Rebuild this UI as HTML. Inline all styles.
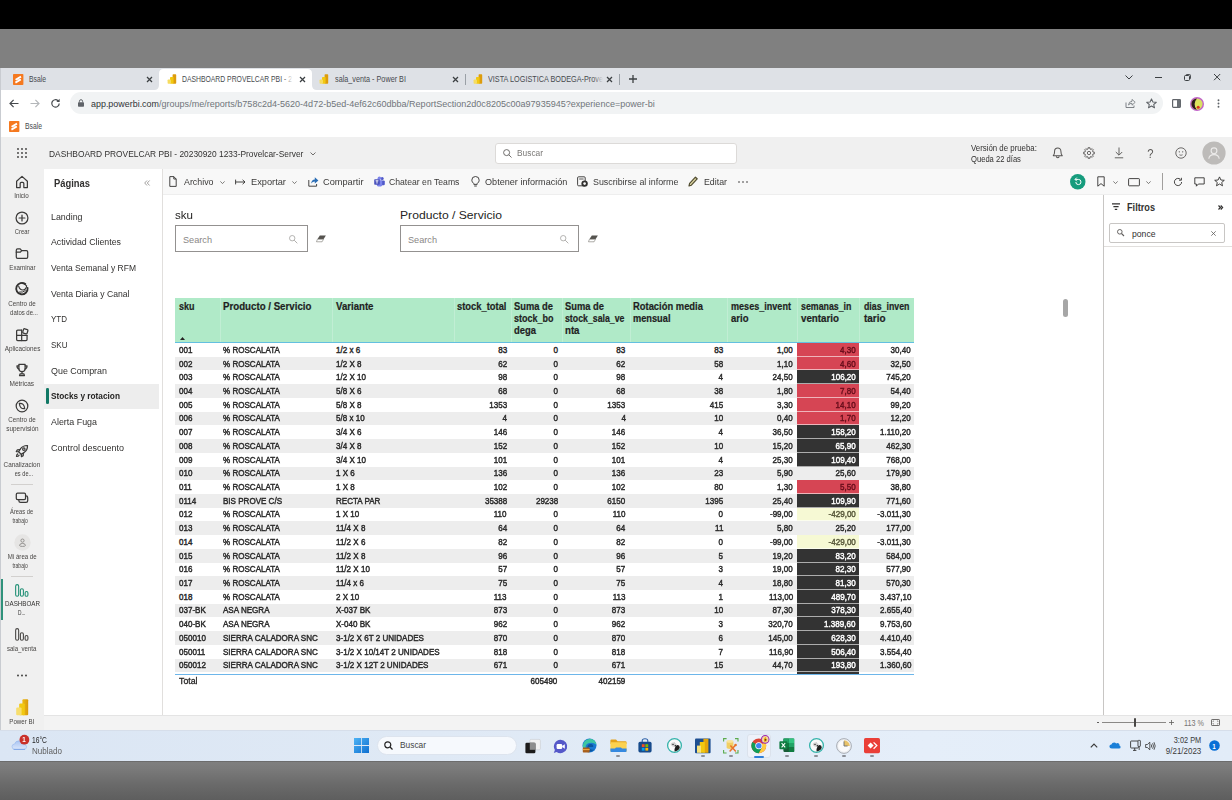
<!DOCTYPE html>
<html lang="es"><head><meta charset="utf-8"><title>DASHBOARD PROVELCAR PBI</title>
<style>
html,body{margin:0;padding:0;}
body{width:1232px;height:800px;overflow:hidden;position:relative;background:#fff;font-family:"Liberation Sans",sans-serif;}
.a{position:absolute;box-sizing:border-box;}
.t{position:absolute;white-space:nowrap;display:block;opacity:0.995;}
svg{overflow:visible;}
#w{position:absolute;left:0;top:0;width:1232px;height:800px;overflow:hidden;filter:blur(0.3px);}
</style></head><body><div id="w">
<div class="a" style="left:0px;top:0px;width:1232px;height:28.8px;background:#000;"></div>
<div class="a" style="left:0px;top:28.8px;width:1232px;height:39.2px;background:#808080;"></div>
<div class="a" style="left:0px;top:68px;width:1232px;height:22px;background:#dee1e6;"></div>
<svg class="a" style="left:154px;top:69px;" width="163" height="21" viewBox="0 0 163 21"><path d="M0 21Q5 21 5 16V4.500Q5 0 9.500 0H153.500Q158 0 158 4.500V16Q158 21 163 21Z" fill="#fff"/></svg>
<div class="a" style="left:0px;top:90px;width:1232px;height:47px;background:#fff;"></div>
<div class="a" style="left:0px;top:68px;width:1px;height:692px;background:#c9ccd1;"></div>
<div class="a" style="left:70px;top:92.3px;width:1093px;height:21.7px;background:#f1f3f4;border-radius:11px;"></div>
<svg class="a" style="left:12.8px;top:73.5px;" width="10.4" height="11" viewBox="0 0 10 10.600"><rect width="10" height="10.600" rx="0.800" fill="#f5791f"/><path d="M2.500 5.500 7.700 2.500M2.300 8.300 7.500 5.300" stroke="#fff" stroke-width="1.750"/><path d="M2.600 5.400 7.400 5.400" stroke="#fff" stroke-width="0.600"/></svg>
<span class="t" style="top:74.41px;font-size:8.6px;line-height:11.18px;color:#474a4e;left:29px;transform:scaleX(0.7903);transform-origin:0 50%;">Bsale</span>
<svg class="a" style="left:146.5px;top:76.8px;" width="5" height="5" viewBox="0 0 5 5"><path d="M0 0 5 5M5 0 0 5" stroke="#3c4043" stroke-width="1.25" fill="none"/></svg>
<svg class="a" style="left:167px;top:74px;" width="10" height="10" viewBox="0 0 10 10"><rect x="5.6" y="0.3" width="3.6" height="9.4" rx="0.7" fill="#dd9c0c"/><rect x="3" y="3" width="3.6" height="6.7" rx="0.7" fill="#f2c811"/><rect x="0.6" y="5.6" width="3.4" height="4.1" rx="0.7" fill="#f6dc5f"/></svg>
<span class="t" style="top:74.41px;font-size:8.6px;line-height:11.18px;color:#474a4e;left:182px;transform:scaleX(0.7937);transform-origin:0 50%;">DASHBOARD PROVELCAR PBI - 2</span>
<div class="a" style="left:283px;top:72px;width:12px;height:15px;background:linear-gradient(90deg,rgba(255,255,255,0),#fff 85%);"></div>
<svg class="a" style="left:299.5px;top:76.8px;" width="5" height="5" viewBox="0 0 5 5"><path d="M0 0 5 5M5 0 0 5" stroke="#3c4043" stroke-width="1.25" fill="none"/></svg>
<svg class="a" style="left:319px;top:74px;" width="10" height="10" viewBox="0 0 10 10"><rect x="5.6" y="0.3" width="3.6" height="9.4" rx="0.7" fill="#dd9c0c"/><rect x="3" y="3" width="3.6" height="6.7" rx="0.7" fill="#f2c811"/><rect x="0.6" y="5.6" width="3.4" height="4.1" rx="0.7" fill="#f6dc5f"/></svg>
<span class="t" style="top:74.41px;font-size:8.6px;line-height:11.18px;color:#474a4e;left:335px;transform:scaleX(0.8440);transform-origin:0 50%;">sala_venta - Power BI</span>
<svg class="a" style="left:452.5px;top:76.8px;" width="5" height="5" viewBox="0 0 5 5"><path d="M0 0 5 5M5 0 0 5" stroke="#3c4043" stroke-width="1.25" fill="none"/></svg>
<div class="a" style="left:465.3px;top:74px;width:1px;height:11px;background:#9aa0a6;"></div>
<svg class="a" style="left:473px;top:74px;" width="10" height="10" viewBox="0 0 10 10"><rect x="5.6" y="0.3" width="3.6" height="9.4" rx="0.7" fill="#dd9c0c"/><rect x="3" y="3" width="3.6" height="6.7" rx="0.7" fill="#f2c811"/><rect x="0.6" y="5.6" width="3.4" height="4.1" rx="0.7" fill="#f6dc5f"/></svg>
<span class="t" style="top:74.41px;font-size:8.6px;line-height:11.18px;color:#474a4e;left:488px;transform:scaleX(0.8453);transform-origin:0 50%;">VISTA LOGISTICA BODEGA-Prove</span>
<div class="a" style="left:593px;top:72px;width:12px;height:15px;background:linear-gradient(90deg,rgba(222,225,230,0),#dee1e6 85%);"></div>
<svg class="a" style="left:606.5px;top:76.8px;" width="5" height="5" viewBox="0 0 5 5"><path d="M0 0 5 5M5 0 0 5" stroke="#3c4043" stroke-width="1.25" fill="none"/></svg>
<div class="a" style="left:619.3px;top:74px;width:1px;height:11px;background:#9aa0a6;"></div>
<svg class="a" style="left:629px;top:75px;" width="8" height="8" viewBox="0 0 8 8"><path d="M4 0V8M0 4H8" stroke="#3c4043" stroke-width="1.300"/></svg>
<svg class="a" style="left:1124.5px;top:74.8px;" width="8" height="5" viewBox="0 0 8 5"><path d="M0.5 0.5 4 4 7.5 0.5" stroke="#3c4043" stroke-width="1" fill="none"/></svg>
<div class="a" style="left:1155px;top:76.8px;width:6.5px;height:1px;background:#3c4043;"></div>
<svg class="a" style="left:1183.8px;top:73.6px;" width="7" height="7" viewBox="0 0 7 7"><rect x="0.5" y="1.5" width="5" height="5" rx="1" stroke="#3c4043" stroke-width="1" fill="none"/><path d="M2 1.5V1.2Q2 0.5 2.8 0.5H5.6Q6.5 0.5 6.5 1.4V4.2Q6.5 5 5.8 5" stroke="#3c4043" stroke-width="0.9" fill="none"/></svg>
<svg class="a" style="left:1214.0px;top:74.10000000000001px;" width="6.2" height="6.2" viewBox="0 0 6.2 6.2"><path d="M0 0 6.2 6.2M6.2 0 0 6.2" stroke="#3c4043" stroke-width="1" fill="none"/></svg>
<svg class="a" style="left:9px;top:99px;" width="10" height="9" viewBox="0 0 10 9"><path d="M9.5 4.5H1.2M4.6 0.8 1 4.5 4.6 8.2" stroke="#45494d" stroke-width="1.2" fill="none"/></svg>
<svg class="a" style="left:30px;top:99px;" width="10" height="9" viewBox="0 0 10 9"><path d="M0.5 4.5H8.8M5.4 0.8 9 4.5 5.4 8.2" stroke="#b4b7ba" stroke-width="1.2" fill="none"/></svg>
<svg class="a" style="left:50px;top:98px;" width="11" height="11" viewBox="0 0 11 11"><path d="M9.2 5.5A3.7 3.7 0 1 1 8 2.7" stroke="#45494d" stroke-width="1.2" fill="none"/><path d="M9.6 0.8V4H6.4Z" fill="#45494d"/></svg>
<svg class="a" style="left:78px;top:99px;" width="6" height="8" viewBox="0 0 6 8"><rect x="0" y="3.2" width="6" height="4.6" rx="0.7" fill="#5f6368"/><path d="M1.4 3.4V2.3A1.6 1.6 0 0 1 4.6 2.3V3.4" stroke="#5f6368" stroke-width="1" fill="none"/></svg>
<span class="t" style="top:98.16px;font-size:9.3px;line-height:12.09px;color:#303336;left:91px;transform:scaleX(0.9602);transform-origin:0 50%;">app.powerbi.com</span>
<span class="t" style="top:98.16px;font-size:9.3px;line-height:12.09px;color:#70757a;left:159px;transform:scaleX(0.9715);transform-origin:0 50%;">/groups/me/reports/b758c2d4-5620-4d72-b5ed-4ef62c60dbba/ReportSection2d0c8205c00a97935945?experience=power-bi</span>
<svg class="a" style="left:1125px;top:98px;" width="11" height="11" viewBox="0 0 11 11"><path d="M1 4.5V9.5H9V7.5" stroke="#70757a" stroke-width="0.900" fill="none"/><path d="M3.5 7Q3.8 3.4 7 3.3V1.4L10.2 4.3 7 7.2V5.3Q4.8 5.2 3.5 7Z" stroke="#70757a" stroke-width="0.800" fill="none" stroke-linejoin="round"/></svg>
<svg class="a" style="left:1146px;top:98px;" width="11" height="11" viewBox="0 0 11 11"><path d="M5.5 0.9 6.9 4 10.3 4.3 7.7 6.5 8.5 9.8 5.5 8 2.5 9.8 3.3 6.5 0.7 4.3 4.1 4Z" stroke="#5f6368" stroke-width="1.050" fill="none" stroke-linejoin="round"/></svg>
<svg class="a" style="left:1172px;top:99px;" width="9" height="9" viewBox="0 0 9 9"><rect x="0.6" y="0.6" width="7.8" height="7.8" rx="0.8" stroke="#5f6368" stroke-width="1.200" fill="#fff"/><rect x="5" y="0.6" width="3.400" height="7.800" fill="#6b7075"/></svg>
<svg class="a" style="left:1190.3px;top:96.5px;" width="14" height="14" viewBox="0 0 14 14"><circle cx="7" cy="7" r="7" fill="#c163c9"/><circle cx="7" cy="7" r="5.600" fill="#d9df63"/><path d="M7 1.400A5.600 5.600 0 0 0 7 12.600Q4.400 10.400 4.600 7 4.800 3.600 7 1.400Z" fill="#2b1a1c"/><path d="M5.400 9.600Q5.200 5.600 7.400 3 8.400 2 9.200 3 11.400 6 10.800 9.600 9.800 12.400 7.800 12.400 5.800 12.200 5.400 9.600Z" fill="#dde35c"/><circle cx="8.200" cy="10.200" r="1.500" fill="#d9321f"/></svg>
<svg class="a" style="left:1217px;top:98px;" width="3" height="11" viewBox="0 0 3 11"><circle cx="1.5" cy="2.200" r="0.950" fill="#5f6368"/><circle cx="1.5" cy="5.500" r="0.950" fill="#5f6368"/><circle cx="1.5" cy="8.800" r="0.950" fill="#5f6368"/></svg>
<svg class="a" style="left:8.8px;top:120.5px;" width="10.4" height="11" viewBox="0 0 10 10.600"><rect width="10" height="10.600" rx="0.800" fill="#f5791f"/><path d="M2.500 5.500 7.700 2.500M2.300 8.300 7.500 5.300" stroke="#fff" stroke-width="1.750"/><path d="M2.600 5.400 7.400 5.400" stroke="#fff" stroke-width="0.600"/></svg>
<span class="t" style="top:121.41px;font-size:8.6px;line-height:11.18px;color:#474a4e;left:25px;transform:scaleX(0.7903);transform-origin:0 50%;">Bsale</span>
<div class="a" style="left:1px;top:137px;width:1231px;height:32px;background:#f0f0f0;"></div>
<div class="a" style="left:1px;top:169px;width:43px;height:562px;background:#f0f0f0;"></div>
<div class="a" style="left:44px;top:169px;width:118px;height:546px;background:#fff;"></div>
<div class="a" style="left:162px;top:169px;width:1px;height:546px;background:#e1dfdd;"></div>
<div class="a" style="left:163px;top:169px;width:1069px;height:25px;background:#f8f8f8;"></div>
<div class="a" style="left:163px;top:194px;width:1069px;height:1px;background:#eeeeee;"></div>
<div class="a" style="left:163px;top:195px;width:940px;height:520px;background:#fff;"></div>
<div class="a" style="left:1103px;top:195px;width:129px;height:520px;background:#fff;border-left:1px solid #c8c6c4;"></div>
<div class="a" style="left:44px;top:714.5px;width:1188px;height:16.5px;background:#f3f3f3;border-top:1px solid #e4e4e4;"></div>
<svg class="a" style="left:17px;top:148px;" width="10" height="10" viewBox="0 0 10 10"><circle cx="1" cy="1" r="0.900" fill="#3b3a39"/><circle cx="1" cy="5" r="0.900" fill="#3b3a39"/><circle cx="1" cy="9" r="0.900" fill="#3b3a39"/><circle cx="5" cy="1" r="0.900" fill="#3b3a39"/><circle cx="5" cy="5" r="0.900" fill="#3b3a39"/><circle cx="5" cy="9" r="0.900" fill="#3b3a39"/><circle cx="9" cy="1" r="0.900" fill="#3b3a39"/><circle cx="9" cy="5" r="0.900" fill="#3b3a39"/><circle cx="9" cy="9" r="0.900" fill="#3b3a39"/></svg>
<span class="t" style="top:147.89px;font-size:9.4px;line-height:12.22px;color:#323130;left:49px;transform:scaleX(0.8940);transform-origin:0 50%;">DASHBOARD PROVELCAR PBI - 20230920 1233-Provelcar-Server</span>
<svg class="a" style="left:310px;top:152px;" width="6" height="4" viewBox="0 0 6 4"><path d="M0.5 0.5 3 3 5.5 0.5" stroke="#605e5c" stroke-width="0.9" fill="none"/></svg>
<div class="a" style="left:495px;top:143.3px;width:242px;height:20.3px;background:#fff;border:1px solid #dcdad8;border-radius:3px;"></div>
<svg class="a" style="left:503px;top:148.5px;" width="9" height="9" viewBox="0 0 9 9"><circle cx="3.6" cy="3.6" r="3" stroke="#605e5c" stroke-width="0.9" fill="none"/><path d="M5.8 5.8 8.5 8.5" stroke="#605e5c" stroke-width="0.9"/></svg>
<span class="t" style="top:148.32px;font-size:9.2px;line-height:11.96px;color:#7a7876;left:517px;transform:scaleX(0.9081);transform-origin:0 50%;">Buscar</span>
<span class="t" style="top:144.47px;font-size:8.2px;line-height:10.66px;color:#323130;left:971px;transform:scaleX(0.9588);transform-origin:0 50%;">Versión de prueba:</span>
<span class="t" style="top:154.67px;font-size:8.2px;line-height:10.66px;color:#323130;left:971px;transform:scaleX(0.9295);transform-origin:0 50%;">Queda 22 días</span>
<svg class="a" style="left:1050.6px;top:146.4px;" width="13.5" height="13.5" viewBox="0 0 12 12"><path d="M2 8.6H10Q8.8 7.4 8.8 4.6A2.8 2.8 0 0 0 3.2 4.6Q3.200 7.400 2 8.600Z" stroke="#545250" stroke-width="0.900" fill="none" stroke-linejoin="round"/><path d="M4.8 9.2A1.2 1.200 0 0 0 7.200 9.200" stroke="#545250" stroke-width="0.9" fill="none"/></svg>
<svg class="a" style="left:1082.5px;top:147.2px;" width="12" height="12" viewBox="0 0 12 12"><circle cx="6" cy="6" r="1.650" stroke="#545250" stroke-width="0.850" fill="none"/><path d="M11.32 5.07 L11.32 6.93 L9.99 6.96 L9.50 8.14 L10.42 9.11 L9.11 10.42 L8.14 9.50 L6.96 9.99 L6.93 11.32 L5.07 11.32 L5.04 9.99 L3.86 9.50 L2.89 10.42 L1.58 9.11 L2.50 8.14 L2.01 6.96 L0.68 6.93 L0.68 5.07 L2.01 5.04 L2.50 3.86 L1.58 2.89 L2.89 1.58 L3.86 2.50 L5.04 2.01 L5.07 0.68 L6.93 0.68 L6.96 2.01 L8.14 2.50 L9.11 1.58 L10.42 2.89 L9.50 3.86 L9.99 5.04Z" stroke="#545250" stroke-width="0.850" fill="none" stroke-linejoin="round"/></svg>
<svg class="a" style="left:1114px;top:147px;" width="10" height="12" viewBox="0 0 10 12"><path d="M5 0.500V8M1.800 5 5 8.200 8.200 5M0.800 10.800H9.200" stroke="#545250" stroke-width="0.900" fill="none"/></svg>
<span class="t" style="top:145.77px;font-size:12.5px;line-height:16.25px;color:#5c5a58;left:1146.52px;transform:scaleX(0.9000);transform-origin:50% 50%;">?</span>
<svg class="a" style="left:1175px;top:147px;" width="12" height="12" viewBox="0 0 12 12"><circle cx="6" cy="6" r="5.200" stroke="#545250" stroke-width="0.850" fill="none"/><circle cx="4.300" cy="4.800" r="0.650" fill="#545250"/><circle cx="7.700" cy="4.800" r="0.650" fill="#545250"/><path d="M4.400 7.800Q6 8.800 7.600 7.800" stroke="#545250" stroke-width="0.750" fill="none"/></svg>
<svg class="a" style="left:1202.8px;top:142.2px;" width="22" height="22" viewBox="0 0 22 22"><circle cx="11" cy="11" r="11.600" fill="#bdbbb9"/><circle cx="11" cy="8.800" r="2.900" stroke="#ecebea" stroke-width="1.100" fill="none"/><path d="M5.800 16.800Q6.200 12.600 11 12.600T16.200 16.800" stroke="#ecebea" stroke-width="1.100" fill="none"/></svg>
<svg class="a" style="left:15px;top:175.2px;" width="14" height="14.0" viewBox="0 0 13 13"><path d="M1.5 5.8 6.5 1.3 11.5 5.8V11.700H8.200V7.800Q8.200 6.800 7.200 6.800H5.800Q4.800 6.800 4.800 7.800V11.700H1.500Z" stroke="#3b3a39" stroke-width="1.150" fill="none" stroke-linejoin="round" stroke-linecap="round"/></svg>
<span class="t" style="top:191.25px;font-size:7.3px;line-height:9.49px;color:#484644;left:13.48px;transform:scaleX(0.8568);transform-origin:50% 50%;">Inicio</span>
<svg class="a" style="left:15px;top:211.2px;" width="14" height="14.0" viewBox="0 0 13 13"><circle cx="6.5" cy="6.5" r="5.5" stroke="#3b3a39" stroke-width="1.150" fill="none" stroke-linejoin="round" stroke-linecap="round"/><path d="M6.5 3.800V9.200M3.800 6.500H9.200" stroke="#3b3a39" stroke-width="1.150" fill="none" stroke-linejoin="round" stroke-linecap="round"/></svg>
<span class="t" style="top:226.95px;font-size:7.3px;line-height:9.49px;color:#484644;left:12.87px;transform:scaleX(0.7999);transform-origin:50% 50%;">Crear</span>
<svg class="a" style="left:15px;top:247.2px;" width="14" height="12.923" viewBox="0 0 13 12"><path d="M1.200 3Q1.200 1.800 2.400 1.800H4.800L6.200 3.400H10.600Q11.800 3.400 11.800 4.600V9.400Q11.800 10.600 10.600 10.600H2.400Q1.200 10.600 1.200 9.400Z" stroke="#3b3a39" stroke-width="1.150" fill="none" stroke-linejoin="round" stroke-linecap="round"/><path d="M1.200 4.800H5L6.200 3.400" stroke="#3b3a39" stroke-width="1.150" fill="none" stroke-linejoin="round" stroke-linecap="round"/></svg>
<span class="t" style="top:262.75px;font-size:7.3px;line-height:9.49px;color:#484644;left:6.58px;transform:scaleX(0.8498);transform-origin:50% 50%;">Examinar</span>
<svg class="a" style="left:15px;top:282.2px;" width="14" height="14" viewBox="0 0 13 13"><path d="M9.600 1.900A5.300 5.300 0 1 0 11.700 5.600" stroke="#323130" stroke-width="1.700" fill="none" stroke-linecap="round"/><path d="M3.400 3.800Q4.400 7.600 7.600 7.400Q10.400 7 10.800 3.600Q8.400 1.200 6.400 1.400" stroke="#323130" stroke-width="1" fill="none" stroke-linecap="round"/><path d="M4.200 9.400Q7.400 10 9.600 8" stroke="#323130" stroke-width="0.900" fill="none" stroke-linecap="round"/></svg>
<span class="t" style="top:299.25px;font-size:7.3px;line-height:9.49px;color:#484644;left:5.97px;transform:scaleX(0.8579);transform-origin:50% 50%;">Centro de</span>
<span class="t" style="top:308.25px;font-size:7.3px;line-height:9.49px;color:#484644;left:6.96px;transform:scaleX(0.8214);transform-origin:50% 50%;">datos de...</span>
<svg class="a" style="left:15px;top:327.7px;" width="14" height="14" viewBox="0 0 13 13"><path d="M6.200 2H2.500Q1.500 2 1.500 3V10.700Q1.500 11.700 2.500 11.700H10.200Q11.200 11.700 11.200 10.700V7" stroke="#3b3a39" stroke-width="1.150" fill="none" stroke-linejoin="round" stroke-linecap="round"/><path d="M6.200 2V11.700M1.500 6.900H11.200" stroke="#3b3a39" stroke-width="1.150" fill="none" stroke-linejoin="round" stroke-linecap="round"/><rect x="7.500" y="1" width="4.200" height="4.200" rx="0.900" stroke="#3b3a39" stroke-width="1.150" fill="none" stroke-linejoin="round" stroke-linecap="round" transform="rotate(18 9.600 3.100)"/></svg>
<span class="t" style="top:344.25px;font-size:7.3px;line-height:9.49px;color:#484644;left:1.51px;transform:scaleX(0.8711);transform-origin:50% 50%;">Aplicaciones</span>
<svg class="a" style="left:15px;top:362.7px;" width="14" height="14.0" viewBox="0 0 13 13"><path d="M3.600 1.300H9.400V5.200A2.900 2.900 0 0 1 3.600 5.200Z" stroke="#3b3a39" stroke-width="1.150" fill="none" stroke-linejoin="round" stroke-linecap="round"/><path d="M3.600 2.600H1.800Q1.800 5.200 3.800 5.600M9.400 2.600H11.200Q11.200 5.200 9.200 5.600M6.500 8.200V10M4.200 11.700H8.800L8.200 10H4.800Z" stroke="#3b3a39" stroke-width="1.150" fill="none" stroke-linejoin="round" stroke-linecap="round"/></svg>
<span class="t" style="top:379.45px;font-size:7.3px;line-height:9.49px;color:#484644;left:8.21px;transform:scaleX(0.8883);transform-origin:50% 50%;">Métricas</span>
<svg class="a" style="left:15px;top:398.7px;" width="14" height="14.0" viewBox="0 0 13 13"><circle cx="6.500" cy="6.500" r="5.400" stroke="#3b3a39" stroke-width="1.150" fill="none" stroke-linejoin="round" stroke-linecap="round"/><path d="M4 4Q8.500 3.500 9 9Q4.500 9.500 4 4Z" stroke="#3b3a39" stroke-width="1.150" fill="none" stroke-linejoin="round" stroke-linecap="round"/></svg>
<span class="t" style="top:414.95px;font-size:7.3px;line-height:9.49px;color:#484644;left:5.97px;transform:scaleX(0.8579);transform-origin:50% 50%;">Centro de</span>
<span class="t" style="top:423.95px;font-size:7.3px;line-height:9.49px;color:#484644;left:3.54px;transform:scaleX(0.8748);transform-origin:50% 50%;">supervisión</span>
<svg class="a" style="left:15px;top:443.7px;" width="14" height="14.0" viewBox="0 0 13 13"><path d="M11.600 1.400Q7.500 1.200 5 4.600L3.400 7.200 5.800 9.600 8.400 8Q11.800 5.500 11.600 1.400Z" stroke="#3b3a39" stroke-width="1.150" fill="none" stroke-linejoin="round" stroke-linecap="round"/><circle cx="8.200" cy="4.800" r="1.100" stroke="#3b3a39" stroke-width="1.150" fill="none" stroke-linejoin="round" stroke-linecap="round"/><path d="M4.600 5.200 2.200 5.400 1.200 7 3.400 7.200M7.800 8.400 7.600 10.800 6 11.800 5.800 9.600M2.600 9.200Q1.400 9.800 1.400 11.600Q3.200 11.600 3.800 10.400" stroke="#3b3a39" stroke-width="1.150" fill="none" stroke-linejoin="round" stroke-linecap="round"/></svg>
<span class="t" style="top:459.95px;font-size:7.3px;line-height:9.49px;color:#484644;left:1.10px;transform:scaleX(0.8757);transform-origin:50% 50%;">Canalizacion</span>
<span class="t" style="top:468.95px;font-size:7.3px;line-height:9.49px;color:#484644;left:11.53px;transform:scaleX(0.7727);transform-origin:50% 50%;">es de...</span>
<div class="a" style="left:10.8px;top:484.3px;width:22px;height:1px;background:#d2d0ce;"></div>
<svg class="a" style="left:15px;top:490.7px;" width="14" height="14.0" viewBox="0 0 13 13"><rect x="1.200" y="2" width="8.600" height="6" rx="1.200" stroke="#3b3a39" stroke-width="1.150" fill="none" stroke-linejoin="round" stroke-linecap="round"/><path d="M3.600 8V9Q3.600 10.600 5.200 10.600H10.200Q11.800 10.600 11.800 9V6.200Q11.800 4.600 10.200 4.600H9.800" stroke="#3b3a39" stroke-width="1.150" fill="none" stroke-linejoin="round" stroke-linecap="round"/></svg>
<span class="t" style="top:507.45px;font-size:7.3px;line-height:9.49px;color:#484644;left:7.39px;transform:scaleX(0.7872);transform-origin:50% 50%;">Áreas de</span>
<span class="t" style="top:516.46px;font-size:7.3px;line-height:9.49px;color:#484644;left:8.64px;transform:scaleX(0.6945);transform-origin:50% 50%;">trabajo</span>
<svg class="a" style="left:14px;top:534px;" width="17" height="17" viewBox="0 0 17 17"><circle cx="8.500" cy="8.500" r="8.200" fill="#e6e5e4"/><circle cx="8.500" cy="6.600" r="1.600" stroke="#8a8886" stroke-width="0.9" fill="none"/><path d="M5.600 11.600Q5.600 9.400 8.500 9.400T11.400 11.600Q11.400 12.400 8.500 12.400T5.600 11.600Z" stroke="#8a8886" stroke-width="0.9" fill="none"/></svg>
<span class="t" style="top:552.25px;font-size:7.3px;line-height:9.49px;color:#484644;left:4.76px;transform:scaleX(0.8351);transform-origin:50% 50%;">Mi área de</span>
<span class="t" style="top:561.25px;font-size:7.3px;line-height:9.49px;color:#484644;left:8.64px;transform:scaleX(0.6945);transform-origin:50% 50%;">trabajo</span>
<div class="a" style="left:10.8px;top:575.5px;width:22px;height:1px;background:#d2d0ce;"></div>
<div class="a" style="left:1px;top:578.5px;width:2.2px;height:41.5px;background:#2f917a;"></div>
<svg class="a" style="left:15px;top:584.2px;" width="14" height="12.923" viewBox="0 0 13 12"><rect x="0.600" y="0.600" width="2.800" height="10.800" rx="1.400" stroke="#1f8f74" stroke-width="1" fill="none"/><rect x="5" y="4.400" width="2.800" height="7" rx="1.400" stroke="#1f8f74" stroke-width="1" fill="none"/><rect x="9.400" y="7" width="2.600" height="4.400" rx="1.300" stroke="#1f8f74" stroke-width="1" fill="none"/></svg>
<span class="t" style="top:599.25px;font-size:7.3px;line-height:9.49px;color:#323130;left:1.51px;transform:scaleX(0.8543);transform-origin:50% 50%;">DASHBOAR</span>
<span class="t" style="top:608.25px;font-size:7.3px;line-height:9.49px;color:#323130;left:16.32px;transform:scaleX(0.6604);transform-origin:50% 50%;">D...</span>
<svg class="a" style="left:15px;top:628.2px;" width="14" height="12.923" viewBox="0 0 13 12"><rect x="0.600" y="0.600" width="2.800" height="10.800" rx="1.400" stroke="#484644" stroke-width="1" fill="none"/><rect x="5" y="4.400" width="2.800" height="7" rx="1.400" stroke="#484644" stroke-width="1" fill="none"/><rect x="9.400" y="7" width="2.600" height="4.400" rx="1.300" stroke="#484644" stroke-width="1" fill="none"/></svg>
<span class="t" style="top:644.25px;font-size:7.3px;line-height:9.49px;color:#484644;left:4.35px;transform:scaleX(0.8355);transform-origin:50% 50%;">sala_venta</span>
<svg class="a" style="left:16px;top:674px;" width="12" height="3" viewBox="0 0 12 3"><circle cx="2" cy="1.500" r="0.9" fill="#323130"/><circle cx="6" cy="1.500" r="0.9" fill="#323130"/><circle cx="10" cy="1.500" r="0.9" fill="#323130"/></svg>
<svg class="a" style="left:15.8px;top:698.6px;" width="12.4" height="16.4" viewBox="0 0 12.4 16.4"><defs><linearGradient id="pb1" x1="0" y1="0" x2="1" y2="0"><stop offset="0" stop-color="#eebb14"/><stop offset="1" stop-color="#d99a0a"/></linearGradient></defs><rect x="6.400" y="0.200" width="5.800" height="16" rx="1" fill="url(#pb1)"/><rect x="3.200" y="4.400" width="5.600" height="11.800" rx="1" fill="#f2c811"/><rect x="0.200" y="8.400" width="5.400" height="7.800" rx="1" fill="#f7de6e"/></svg>
<span class="t" style="top:716.75px;font-size:7.3px;line-height:9.49px;color:#484644;left:7.19px;transform:scaleX(0.8441);transform-origin:50% 50%;">Power BI</span>
<span class="t" style="top:177.11px;font-size:10.6px;line-height:13.78px;color:#323130;font-weight:bold;left:54px;transform:scaleX(0.8857);transform-origin:0 50%;">Páginas</span>
<svg class="a" style="left:144px;top:180px;" width="6" height="6" viewBox="0 0 6 6"><path d="M3 0.500 0.700 3 3 5.500M5.600 0.500 3.300 3 5.600 5.500" stroke="#8a8886" stroke-width="0.8" fill="none"/></svg>
<span class="t" style="top:210.76px;font-size:9.6px;line-height:12.48px;color:#323130;left:50.8px;transform:scaleX(0.9220);transform-origin:0 50%;">Landing</span>
<span class="t" style="top:236.43px;font-size:9.6px;line-height:12.48px;color:#323130;left:50.8px;transform:scaleX(0.9174);transform-origin:0 50%;">Actividad Clientes</span>
<span class="t" style="top:262.1px;font-size:9.6px;line-height:12.48px;color:#323130;left:50.8px;transform:scaleX(0.8851);transform-origin:0 50%;">Venta Semanal y RFM</span>
<span class="t" style="top:287.77px;font-size:9.6px;line-height:12.48px;color:#323130;left:50.8px;transform:scaleX(0.8970);transform-origin:0 50%;">Venta Diaria y Canal</span>
<span class="t" style="top:313.44px;font-size:9.6px;line-height:12.48px;color:#323130;left:50.8px;transform:scaleX(0.8333);transform-origin:0 50%;">YTD</span>
<span class="t" style="top:339.11px;font-size:9.6px;line-height:12.48px;color:#323130;left:50.8px;transform:scaleX(0.8359);transform-origin:0 50%;">SKU</span>
<span class="t" style="top:364.78px;font-size:9.6px;line-height:12.48px;color:#323130;left:50.8px;transform:scaleX(0.9288);transform-origin:0 50%;">Que Compran</span>
<div class="a" style="left:44px;top:384.19px;width:115px;height:24.8px;background:#ededed;"></div>
<div class="a" style="left:46.2px;top:387.69px;width:2.6px;height:16.2px;background:#117865;border-radius:1.300px;"></div>
<span class="t" style="top:390.45px;font-size:9.6px;line-height:12.48px;color:#252423;font-weight:bold;left:50.8px;transform:scaleX(0.8623);transform-origin:0 50%;">Stocks y rotacion</span>
<span class="t" style="top:416.12px;font-size:9.6px;line-height:12.48px;color:#323130;left:50.8px;transform:scaleX(0.9270);transform-origin:0 50%;">Alerta Fuga</span>
<span class="t" style="top:441.79px;font-size:9.6px;line-height:12.48px;color:#323130;left:50.8px;transform:scaleX(0.9370);transform-origin:0 50%;">Control descuento</span>
<svg class="a" style="left:169px;top:176px;" width="8" height="11" viewBox="0 0 8 11"><path d="M0.800 0.600H4.800L7.200 3V10.400H0.800ZM4.800 0.600V3H7.200" stroke="#323130" stroke-width="0.9" fill="none" stroke-linejoin="round"/></svg>
<span class="t" style="top:176.52px;font-size:9.2px;line-height:11.96px;color:#3b3a39;left:184px;transform:scaleX(0.9617);transform-origin:0 50%;">Archivo</span>
<svg class="a" style="left:219.5px;top:180.8px;" width="5" height="3.5" viewBox="0 0 5 3.5"><path d="M0.400 0.400 2.500 2.600 4.600 0.400" stroke="#605e5c" stroke-width="0.8" fill="none"/></svg>
<svg class="a" style="left:235px;top:179px;" width="11" height="6" viewBox="0 0 11 6"><path d="M0.600 0.600V5.400M0.600 3H10M7.600 0.800 10 3 7.600 5.200" stroke="#323130" stroke-width="0.9" fill="none"/></svg>
<span class="t" style="top:176.52px;font-size:9.2px;line-height:11.96px;color:#3b3a39;left:251px;transform:scaleX(1.0067);transform-origin:0 50%;">Exportar</span>
<svg class="a" style="left:291.5px;top:180.8px;" width="5" height="3.5" viewBox="0 0 5 3.5"><path d="M0.400 0.400 2.500 2.600 4.600 0.400" stroke="#605e5c" stroke-width="0.8" fill="none"/></svg>
<svg class="a" style="left:307.8px;top:176px;" width="11" height="11" viewBox="0 0 11 11"><path d="M0.800 4V10.200H8.600V8" stroke="#323130" stroke-width="0.9" fill="none"/><path d="M3.200 7.400Q3.600 3.600 6.800 3.400V1.200L10.400 4.400 6.800 7.600V5.600Q4.600 5.600 3.200 7.400Z" fill="#2a6db5"/></svg>
<span class="t" style="top:176.52px;font-size:9.2px;line-height:11.96px;color:#3b3a39;left:323px;transform:scaleX(1.0029);transform-origin:0 50%;">Compartir</span>
<svg class="a" style="left:374px;top:176px;" width="11" height="11" viewBox="0 0 11 11"><circle cx="8.200" cy="2.600" r="1.500" fill="#5059c9"/><rect x="6.400" y="4.400" width="4.400" height="4.800" rx="1.200" fill="#5059c9"/><circle cx="5.400" cy="2.200" r="1.800" fill="#7b83eb"/><rect x="2.800" y="4.200" width="5.400" height="6.200" rx="1.400" fill="#7b83eb"/><rect x="0.200" y="3.200" width="5.600" height="5.600" rx="0.800" fill="#4b53bc"/><path d="M1.600 4.800H4.400M3 4.800V7.600" stroke="#fff" stroke-width="0.9"/></svg>
<span class="t" style="top:176.52px;font-size:9.2px;line-height:11.96px;color:#3b3a39;left:389px;transform:scaleX(0.9400);transform-origin:0 50%;">Chatear en Teams</span>
<svg class="a" style="left:470.5px;top:176px;" width="9" height="11" viewBox="0 0 9 11"><path d="M2.800 7.600Q0.800 6 0.800 4.200A3.700 3.700 0 0 1 8.200 4.200Q8.200 6 6.200 7.600V8.400H2.800Z" stroke="#323130" stroke-width="0.9" fill="none"/><path d="M3.200 10H5.800" stroke="#323130" stroke-width="0.9"/></svg>
<span class="t" style="top:176.52px;font-size:9.2px;line-height:11.96px;color:#3b3a39;left:485px;transform:scaleX(0.9898);transform-origin:0 50%;">Obtener información</span>
<svg class="a" style="left:577px;top:176px;" width="11" height="11" viewBox="0 0 11 11"><rect x="0.600" y="0.800" width="7.600" height="9" rx="1" stroke="#323130" stroke-width="0.9" fill="none"/><path d="M2.200 3H6.600" stroke="#323130" stroke-width="0.8"/><circle cx="7.600" cy="7.600" r="3.200" fill="#323130"/><circle cx="7.600" cy="7.600" r="1.300" fill="#f8f8f8"/></svg>
<span class="t" style="top:176.52px;font-size:9.2px;line-height:11.96px;color:#3b3a39;left:593px;transform:scaleX(0.9667);transform-origin:0 50%;">Suscribirse al informe</span>
<svg class="a" style="left:688px;top:176px;" width="10" height="11" viewBox="0 0 10 11"><path d="M1 10 1.600 7.400 7.400 1.200 9.200 2.800 3.400 9.200Z" stroke="#4f4a2e" stroke-width="1.150" fill="#d9d2a0" stroke-linejoin="round"/></svg>
<span class="t" style="top:176.52px;font-size:9.2px;line-height:11.96px;color:#3b3a39;left:704px;transform:scaleX(0.9571);transform-origin:0 50%;">Editar</span>
<svg class="a" style="left:738px;top:181px;" width="10" height="2" viewBox="0 0 10 2"><circle cx="1" cy="1" r="0.800" fill="#323130"/><circle cx="5" cy="1" r="0.800" fill="#323130"/><circle cx="9" cy="1" r="0.800" fill="#323130"/></svg>
<svg class="a" style="left:1069.5px;top:174px;" width="15.5" height="15.5" viewBox="0 0 15.5 15.5"><circle cx="7.750" cy="7.750" r="7.750" fill="#169c7d"/><path d="M5.200 5.400H8.400A2.600 2.600 0 1 1 5.800 8" stroke="#fff" stroke-width="1" fill="none"/><path d="M6.800 3.600 5 5.400 6.800 7.200" stroke="#fff" stroke-width="1" fill="none"/></svg>
<svg class="a" style="left:1097px;top:176px;" width="8" height="11" viewBox="0 0 8 11"><path d="M0.800 0.800H7.200V10.200L4 7.600 0.800 10.200Z" stroke="#323130" stroke-width="0.9" fill="none" stroke-linejoin="round"/></svg>
<svg class="a" style="left:1112.5px;top:180.8px;" width="5" height="3.5" viewBox="0 0 5 3.5"><path d="M0.400 0.400 2.500 2.600 4.600 0.400" stroke="#605e5c" stroke-width="0.8" fill="none"/></svg>
<svg class="a" style="left:1127.6px;top:177.5px;" width="12" height="9" viewBox="0 0 12 9"><rect x="0.600" y="0.600" width="10.800" height="7.200" rx="0.600" stroke="#323130" stroke-width="0.9" fill="none"/></svg>
<svg class="a" style="left:1145.5px;top:180.8px;" width="5" height="3.5" viewBox="0 0 5 3.5"><path d="M0.400 0.400 2.500 2.600 4.600 0.400" stroke="#605e5c" stroke-width="0.8" fill="none"/></svg>
<div class="a" style="left:1162.2px;top:173px;width:1px;height:17px;background:#a19f9d;"></div>
<svg class="a" style="left:1173px;top:176.5px;" width="10" height="10" viewBox="0 0 10 10"><path d="M8.600 5A3.600 3.600 0 1 1 7.400 2.300" stroke="#323130" stroke-width="0.9" fill="none"/><path d="M8.400 0.800V3.200H6" stroke="#323130" stroke-width="0.9" fill="none"/></svg>
<svg class="a" style="left:1193.5px;top:176.5px;" width="11" height="10" viewBox="0 0 11 10"><path d="M0.800 0.800H10.200V7H4.400L2.400 9.200V7H0.800Z" stroke="#323130" stroke-width="0.9" fill="none" stroke-linejoin="round"/></svg>
<svg class="a" style="left:1213.5px;top:176px;" width="11" height="11" viewBox="0 0 11 11"><path d="M5.500 0.900 6.900 4 10.300 4.300 7.700 6.500 8.500 9.800 5.500 8 2.500 9.800 3.300 6.500 0.700 4.300 4.100 4Z" stroke="#323130" stroke-width="0.9" fill="none" stroke-linejoin="round"/></svg>
<svg class="a" style="left:1112px;top:203px;" width="8" height="7" viewBox="0 0 8 7"><path d="M0 0.800H8M1.400 3.600H6.600M2.800 6.400H5.200" stroke="#323130" stroke-width="1.200"/></svg>
<span class="t" style="top:200.94px;font-size:10.4px;line-height:13.52px;color:#323130;font-weight:bold;left:1127px;transform:scaleX(0.8811);transform-origin:0 50%;">Filtros</span>
<svg class="a" style="left:1217.5px;top:204.5px;" width="5" height="5" viewBox="0 0 5 5"><path d="M0.500 0.500 2.400 2.500 0.500 4.500M2.700 0.500 4.600 2.500 2.700 4.500" stroke="#323130" stroke-width="1.200" fill="none"/></svg>
<div class="a" style="left:1109px;top:223.4px;width:115.5px;height:19.6px;background:#fff;border:1px solid #c8c6c4;border-radius:2px;"></div>
<svg class="a" style="left:1117px;top:229px;" width="7" height="7" viewBox="0 0 7 7"><circle cx="2.800" cy="2.800" r="2.300" stroke="#605e5c" stroke-width="0.950" fill="none"/><path d="M4.500 4.500 7 7" stroke="#605e5c" stroke-width="1.100"/></svg>
<span class="t" style="top:228.68px;font-size:8.8px;line-height:11.44px;color:#323130;left:1132px;transform:scaleX(0.9802);transform-origin:0 50%;">ponce</span>
<svg class="a" style="left:1210.5px;top:230.5px;" width="5" height="5" viewBox="0 0 5 5"><path d="M0.300 0.300 4.700 4.700M4.700 0.300 0.300 4.700" stroke="#605e5c" stroke-width="0.800"/></svg>
<div class="a" style="left:1104px;top:246px;width:128px;height:1px;background:#e1dfdd;"></div>
<div class="a" style="left:1096.5px;top:722px;width:2px;height:1px;background:#605e5c;"></div>
<div class="a" style="left:1101.5px;top:722px;width:64px;height:1px;background:#8a8886;"></div>
<div class="a" style="left:1134px;top:718px;width:2px;height:9px;background:#484644;border-radius:1px;"></div>
<svg class="a" style="left:1168.5px;top:720px;" width="5" height="5" viewBox="0 0 5 5"><path d="M2.500 0V5M0 2.500H5" stroke="#605e5c" stroke-width="0.800"/></svg>
<span class="t" style="top:717.54px;font-size:8.4px;line-height:10.92px;color:#767472;left:1184px;transform:scaleX(0.8623);transform-origin:0 50%;">113 %</span>
<svg class="a" style="left:1210.5px;top:718.5px;" width="9" height="7" viewBox="0 0 9 7"><rect x="0.500" y="0.500" width="8" height="6" rx="0.600" stroke="#605e5c" stroke-width="0.900" fill="none"/><path d="M2 2.800V2H3M6 2H7V2.800M7 4.200V5H6M3 5H2V4.200" stroke="#605e5c" stroke-width="0.600" fill="none"/></svg>
<span class="t" style="top:208.33px;font-size:11.8px;line-height:15.34px;color:#252423;left:175px;transform:scaleX(0.9803);transform-origin:0 50%;">sku</span>
<div class="a" style="left:174.7px;top:225.2px;width:133.3px;height:27.3px;background:#fff;border:1px solid #939190;"></div>
<span class="t" style="top:233.63px;font-size:9.8px;line-height:12.74px;color:#8a8886;left:182.5px;transform:scaleX(0.9340);transform-origin:0 50%;">Search</span>
<svg class="a" style="left:289px;top:234.7px;" width="9" height="9" viewBox="0 0 9 9"><circle cx="3.200" cy="3.200" r="2.700" stroke="#a8a6a4" stroke-width="0.850" fill="none"/><path d="M5.200 5.200 8.300 8.300" stroke="#a8a6a4" stroke-width="0.900"/></svg>
<svg class="a" style="left:316.3px;top:234.6px;" width="10.2" height="7.4" viewBox="0 0 10.2 7.4"><path d="M3.800 0.400H9.900L7.500 4.300H1.400Z" fill="#55534f"/><path d="M1.400 4.300H7.500L6.100 6.800H0.500Z" fill="#fff" stroke="#77756f" stroke-width="0.600" stroke-linejoin="round"/></svg>
<span class="t" style="top:208.33px;font-size:11.8px;line-height:15.34px;color:#252423;left:400px;transform:scaleX(1.0300);transform-origin:0 50%;">Producto / Servicio</span>
<div class="a" style="left:399.7px;top:225.2px;width:179.6px;height:27.3px;background:#fff;border:1px solid #939190;"></div>
<span class="t" style="top:233.63px;font-size:9.8px;line-height:12.74px;color:#8a8886;left:407.5px;transform:scaleX(0.9340);transform-origin:0 50%;">Search</span>
<svg class="a" style="left:559.5px;top:234.7px;" width="9" height="9" viewBox="0 0 9 9"><circle cx="3.200" cy="3.200" r="2.700" stroke="#a8a6a4" stroke-width="0.850" fill="none"/><path d="M5.200 5.200 8.300 8.300" stroke="#a8a6a4" stroke-width="0.900"/></svg>
<svg class="a" style="left:587.5px;top:234.6px;" width="10.2" height="7.4" viewBox="0 0 10.2 7.4"><path d="M3.800 0.400H9.900L7.500 4.300H1.400Z" fill="#55534f"/><path d="M1.400 4.300H7.500L6.100 6.800H0.500Z" fill="#fff" stroke="#77756f" stroke-width="0.600" stroke-linejoin="round"/></svg>
<div class="a" style="left:1063px;top:299px;width:4.5px;height:17.5px;background:#a6a6a6;border-radius:2.500px;"></div>
<div class="a" style="left:175px;top:298.3px;width:739.3px;height:43.6px;background:#b0eac8;"></div>
<div class="a" style="left:219.5px;top:298.3px;width:1px;height:43.6px;background:rgba(255,255,255,0.22);"></div>
<div class="a" style="left:332px;top:298.3px;width:1px;height:43.6px;background:rgba(255,255,255,0.22);"></div>
<div class="a" style="left:454px;top:298.3px;width:1px;height:43.6px;background:rgba(255,255,255,0.22);"></div>
<div class="a" style="left:511px;top:298.3px;width:1px;height:43.6px;background:rgba(255,255,255,0.22);"></div>
<div class="a" style="left:562px;top:298.3px;width:1px;height:43.6px;background:rgba(255,255,255,0.22);"></div>
<div class="a" style="left:630px;top:298.3px;width:1px;height:43.6px;background:rgba(255,255,255,0.22);"></div>
<div class="a" style="left:727.3px;top:298.3px;width:1px;height:43.6px;background:rgba(255,255,255,0.22);"></div>
<div class="a" style="left:797px;top:298.3px;width:1px;height:43.6px;background:rgba(255,255,255,0.22);"></div>
<div class="a" style="left:859.3px;top:298.3px;width:1px;height:43.6px;background:rgba(255,255,255,0.22);"></div>
<div class="a" style="left:175px;top:341.6px;width:739.3px;height:1.2px;background:#63bfe0;"></div>
<span class="t" style="top:300.07px;font-size:10.2px;line-height:13.26px;color:#1f1f1f;font-weight:bold;left:179px;transform:scaleX(0.8820);transform-origin:0 50%;-webkit-text-stroke:0.200px #1f1f1f;">sku</span>
<svg class="a" style="left:180px;top:337px;" width="5" height="3" viewBox="0 0 5 3"><path d="M0 3 2.500 0 5 3Z" fill="#252423"/></svg>
<span class="t" style="top:300.07px;font-size:10.2px;line-height:13.26px;color:#1f1f1f;font-weight:bold;left:222.5px;transform:scaleX(0.9521);transform-origin:0 50%;-webkit-text-stroke:0.200px #1f1f1f;">Producto / Servicio</span>
<span class="t" style="top:300.07px;font-size:10.2px;line-height:13.26px;color:#1f1f1f;font-weight:bold;left:335.5px;transform:scaleX(0.9449);transform-origin:0 50%;-webkit-text-stroke:0.200px #1f1f1f;">Variante</span>
<span class="t" style="top:300.07px;font-size:10.2px;line-height:13.26px;color:#1f1f1f;font-weight:bold;left:457px;transform:scaleX(0.9193);transform-origin:0 50%;-webkit-text-stroke:0.200px #1f1f1f;">stock_total</span>
<span class="t" style="top:300.07px;font-size:10.2px;line-height:13.26px;color:#1f1f1f;font-weight:bold;left:514.2px;transform:scaleX(0.9174);transform-origin:0 50%;-webkit-text-stroke:0.200px #1f1f1f;">Suma de</span>
<span class="t" style="top:312.07px;font-size:10.2px;line-height:13.26px;color:#1f1f1f;font-weight:bold;left:514.2px;transform:scaleX(0.8822);transform-origin:0 50%;-webkit-text-stroke:0.200px #1f1f1f;">stock_bo</span>
<span class="t" style="top:324.07px;font-size:10.2px;line-height:13.26px;color:#1f1f1f;font-weight:bold;left:514.2px;transform:scaleX(0.9242);transform-origin:0 50%;-webkit-text-stroke:0.200px #1f1f1f;">dega</span>
<span class="t" style="top:300.07px;font-size:10.2px;line-height:13.26px;color:#1f1f1f;font-weight:bold;left:565px;transform:scaleX(0.9174);transform-origin:0 50%;-webkit-text-stroke:0.200px #1f1f1f;">Suma de</span>
<span class="t" style="top:312.07px;font-size:10.2px;line-height:13.26px;color:#1f1f1f;font-weight:bold;left:565px;transform:scaleX(0.8601);transform-origin:0 50%;-webkit-text-stroke:0.200px #1f1f1f;">stock_sala_ve</span>
<span class="t" style="top:324.07px;font-size:10.2px;line-height:13.26px;color:#1f1f1f;font-weight:bold;left:565px;transform:scaleX(0.9478);transform-origin:0 50%;-webkit-text-stroke:0.200px #1f1f1f;">nta</span>
<span class="t" style="top:300.07px;font-size:10.2px;line-height:13.26px;color:#1f1f1f;font-weight:bold;left:633.3px;transform:scaleX(0.9218);transform-origin:0 50%;-webkit-text-stroke:0.200px #1f1f1f;">Rotación media</span>
<span class="t" style="top:312.07px;font-size:10.2px;line-height:13.26px;color:#1f1f1f;font-weight:bold;left:633.3px;transform:scaleX(0.9062);transform-origin:0 50%;-webkit-text-stroke:0.200px #1f1f1f;">mensual</span>
<span class="t" style="top:300.07px;font-size:10.2px;line-height:13.26px;color:#1f1f1f;font-weight:bold;left:730.8px;transform:scaleX(0.8893);transform-origin:0 50%;-webkit-text-stroke:0.200px #1f1f1f;">meses_invent</span>
<span class="t" style="top:312.07px;font-size:10.2px;line-height:13.26px;color:#1f1f1f;font-weight:bold;left:730.8px;transform:scaleX(0.9355);transform-origin:0 50%;-webkit-text-stroke:0.200px #1f1f1f;">ario</span>
<span class="t" style="top:300.07px;font-size:10.2px;line-height:13.26px;color:#1f1f1f;font-weight:bold;left:800.8px;transform:scaleX(0.8648);transform-origin:0 50%;-webkit-text-stroke:0.200px #1f1f1f;">semanas_in</span>
<span class="t" style="top:312.07px;font-size:10.2px;line-height:13.26px;color:#1f1f1f;font-weight:bold;left:800.8px;transform:scaleX(0.9577);transform-origin:0 50%;-webkit-text-stroke:0.200px #1f1f1f;">ventario</span>
<span class="t" style="top:300.07px;font-size:10.2px;line-height:13.26px;color:#1f1f1f;font-weight:bold;left:863.7px;transform:scaleX(0.8631);transform-origin:0 50%;-webkit-text-stroke:0.200px #1f1f1f;">dias_inven</span>
<span class="t" style="top:312.07px;font-size:10.2px;line-height:13.26px;color:#1f1f1f;font-weight:bold;left:863.7px;transform:scaleX(0.9728);transform-origin:0 50%;-webkit-text-stroke:0.200px #1f1f1f;">tario</span>
<span class="t" style="top:344.79px;font-size:9.1px;line-height:11.83px;color:#2b2b2b;left:179.2px;transform:scaleX(0.8850);transform-origin:0 50%;-webkit-text-stroke:0.450px currentColor;">001</span>
<span class="t" style="top:344.79px;font-size:9.1px;line-height:11.83px;color:#2b2b2b;left:222.5px;transform:scaleX(0.8850);transform-origin:0 50%;-webkit-text-stroke:0.450px currentColor;">% ROSCALATA</span>
<span class="t" style="top:344.79px;font-size:9.1px;line-height:11.83px;color:#2b2b2b;left:335.5px;transform:scaleX(0.8850);transform-origin:0 50%;-webkit-text-stroke:0.450px currentColor;">1/2 x 6</span>
<span class="t" style="top:344.79px;font-size:9.1px;line-height:11.83px;color:#2b2b2b;right:725.2px;transform:scaleX(0.8850);transform-origin:100% 50%;-webkit-text-stroke:0.450px currentColor;">83</span>
<span class="t" style="top:344.79px;font-size:9.1px;line-height:11.83px;color:#2b2b2b;right:674.2px;transform:scaleX(0.8850);transform-origin:100% 50%;-webkit-text-stroke:0.450px currentColor;">0</span>
<span class="t" style="top:344.79px;font-size:9.1px;line-height:11.83px;color:#2b2b2b;right:606.4px;transform:scaleX(0.8850);transform-origin:100% 50%;-webkit-text-stroke:0.450px currentColor;">83</span>
<span class="t" style="top:344.79px;font-size:9.1px;line-height:11.83px;color:#2b2b2b;right:508.5px;transform:scaleX(0.8850);transform-origin:100% 50%;-webkit-text-stroke:0.450px currentColor;">83</span>
<span class="t" style="top:344.79px;font-size:9.1px;line-height:11.83px;color:#2b2b2b;right:439px;transform:scaleX(0.8850);transform-origin:100% 50%;-webkit-text-stroke:0.450px currentColor;">1,00</span>
<div class="a" style="left:797.2px;top:343.04px;width:62px;height:14.02px;background:#d64554;"></div>
<div class="a" style="left:797.2px;top:356px;width:62px;height:1px;background:rgba(255,255,255,0.600);"></div>
<span class="t" style="top:344.79px;font-size:9.1px;line-height:11.83px;color:#6a0f1c;right:376.20000000000005px;transform:scaleX(0.8850);transform-origin:100% 50%;-webkit-text-stroke:0.450px currentColor;">4,30</span>
<span class="t" style="top:344.79px;font-size:9.1px;line-height:11.83px;color:#2b2b2b;right:321px;transform:scaleX(0.8850);transform-origin:100% 50%;-webkit-text-stroke:0.450px currentColor;">30,40</span>
<div class="a" style="left:175px;top:356.76px;width:739.3px;height:13.72px;background:#ededed;"></div>
<span class="t" style="top:358.51px;font-size:9.1px;line-height:11.83px;color:#2b2b2b;left:179.2px;transform:scaleX(0.8850);transform-origin:0 50%;-webkit-text-stroke:0.450px currentColor;">002</span>
<span class="t" style="top:358.51px;font-size:9.1px;line-height:11.83px;color:#2b2b2b;left:222.5px;transform:scaleX(0.8850);transform-origin:0 50%;-webkit-text-stroke:0.450px currentColor;">% ROSCALATA</span>
<span class="t" style="top:358.51px;font-size:9.1px;line-height:11.83px;color:#2b2b2b;left:335.5px;transform:scaleX(0.8850);transform-origin:0 50%;-webkit-text-stroke:0.450px currentColor;">1/2 X 8</span>
<span class="t" style="top:358.51px;font-size:9.1px;line-height:11.83px;color:#2b2b2b;right:725.2px;transform:scaleX(0.8850);transform-origin:100% 50%;-webkit-text-stroke:0.450px currentColor;">62</span>
<span class="t" style="top:358.51px;font-size:9.1px;line-height:11.83px;color:#2b2b2b;right:674.2px;transform:scaleX(0.8850);transform-origin:100% 50%;-webkit-text-stroke:0.450px currentColor;">0</span>
<span class="t" style="top:358.51px;font-size:9.1px;line-height:11.83px;color:#2b2b2b;right:606.4px;transform:scaleX(0.8850);transform-origin:100% 50%;-webkit-text-stroke:0.450px currentColor;">62</span>
<span class="t" style="top:358.51px;font-size:9.1px;line-height:11.83px;color:#2b2b2b;right:508.5px;transform:scaleX(0.8850);transform-origin:100% 50%;-webkit-text-stroke:0.450px currentColor;">58</span>
<span class="t" style="top:358.51px;font-size:9.1px;line-height:11.83px;color:#2b2b2b;right:439px;transform:scaleX(0.8850);transform-origin:100% 50%;-webkit-text-stroke:0.450px currentColor;">1,10</span>
<div class="a" style="left:797.2px;top:356.76px;width:62px;height:14.02px;background:#d64554;"></div>
<div class="a" style="left:797.2px;top:369px;width:62px;height:1px;background:rgba(255,255,255,0.600);"></div>
<span class="t" style="top:358.51px;font-size:9.1px;line-height:11.83px;color:#6a0f1c;right:376.20000000000005px;transform:scaleX(0.8850);transform-origin:100% 50%;-webkit-text-stroke:0.450px currentColor;">4,60</span>
<span class="t" style="top:358.51px;font-size:9.1px;line-height:11.83px;color:#2b2b2b;right:321px;transform:scaleX(0.8850);transform-origin:100% 50%;-webkit-text-stroke:0.450px currentColor;">32,50</span>
<span class="t" style="top:372.23px;font-size:9.1px;line-height:11.83px;color:#2b2b2b;left:179.2px;transform:scaleX(0.8850);transform-origin:0 50%;-webkit-text-stroke:0.450px currentColor;">003</span>
<span class="t" style="top:372.23px;font-size:9.1px;line-height:11.83px;color:#2b2b2b;left:222.5px;transform:scaleX(0.8850);transform-origin:0 50%;-webkit-text-stroke:0.450px currentColor;">% ROSCALATA</span>
<span class="t" style="top:372.23px;font-size:9.1px;line-height:11.83px;color:#2b2b2b;left:335.5px;transform:scaleX(0.8850);transform-origin:0 50%;-webkit-text-stroke:0.450px currentColor;">1/2 X 10</span>
<span class="t" style="top:372.23px;font-size:9.1px;line-height:11.83px;color:#2b2b2b;right:725.2px;transform:scaleX(0.8850);transform-origin:100% 50%;-webkit-text-stroke:0.450px currentColor;">98</span>
<span class="t" style="top:372.23px;font-size:9.1px;line-height:11.83px;color:#2b2b2b;right:674.2px;transform:scaleX(0.8850);transform-origin:100% 50%;-webkit-text-stroke:0.450px currentColor;">0</span>
<span class="t" style="top:372.23px;font-size:9.1px;line-height:11.83px;color:#2b2b2b;right:606.4px;transform:scaleX(0.8850);transform-origin:100% 50%;-webkit-text-stroke:0.450px currentColor;">98</span>
<span class="t" style="top:372.23px;font-size:9.1px;line-height:11.83px;color:#2b2b2b;right:508.5px;transform:scaleX(0.8850);transform-origin:100% 50%;-webkit-text-stroke:0.450px currentColor;">4</span>
<span class="t" style="top:372.23px;font-size:9.1px;line-height:11.83px;color:#2b2b2b;right:439px;transform:scaleX(0.8850);transform-origin:100% 50%;-webkit-text-stroke:0.450px currentColor;">24,50</span>
<div class="a" style="left:797.2px;top:370.48px;width:62px;height:14.02px;background:#333333;"></div>
<div class="a" style="left:797.2px;top:383px;width:62px;height:1px;background:rgba(255,255,255,0.600);"></div>
<span class="t" style="top:372.23px;font-size:9.1px;line-height:11.83px;color:#ffffff;right:376.20000000000005px;transform:scaleX(0.8850);transform-origin:100% 50%;-webkit-text-stroke:0.450px currentColor;">106,20</span>
<span class="t" style="top:372.23px;font-size:9.1px;line-height:11.83px;color:#2b2b2b;right:321px;transform:scaleX(0.8850);transform-origin:100% 50%;-webkit-text-stroke:0.450px currentColor;">745,20</span>
<div class="a" style="left:175px;top:384.2px;width:739.3px;height:13.72px;background:#ededed;"></div>
<span class="t" style="top:385.95px;font-size:9.1px;line-height:11.83px;color:#2b2b2b;left:179.2px;transform:scaleX(0.8850);transform-origin:0 50%;-webkit-text-stroke:0.450px currentColor;">004</span>
<span class="t" style="top:385.95px;font-size:9.1px;line-height:11.83px;color:#2b2b2b;left:222.5px;transform:scaleX(0.8850);transform-origin:0 50%;-webkit-text-stroke:0.450px currentColor;">% ROSCALATA</span>
<span class="t" style="top:385.95px;font-size:9.1px;line-height:11.83px;color:#2b2b2b;left:335.5px;transform:scaleX(0.8850);transform-origin:0 50%;-webkit-text-stroke:0.450px currentColor;">5/8 X 6</span>
<span class="t" style="top:385.95px;font-size:9.1px;line-height:11.83px;color:#2b2b2b;right:725.2px;transform:scaleX(0.8850);transform-origin:100% 50%;-webkit-text-stroke:0.450px currentColor;">68</span>
<span class="t" style="top:385.95px;font-size:9.1px;line-height:11.83px;color:#2b2b2b;right:674.2px;transform:scaleX(0.8850);transform-origin:100% 50%;-webkit-text-stroke:0.450px currentColor;">0</span>
<span class="t" style="top:385.95px;font-size:9.1px;line-height:11.83px;color:#2b2b2b;right:606.4px;transform:scaleX(0.8850);transform-origin:100% 50%;-webkit-text-stroke:0.450px currentColor;">68</span>
<span class="t" style="top:385.95px;font-size:9.1px;line-height:11.83px;color:#2b2b2b;right:508.5px;transform:scaleX(0.8850);transform-origin:100% 50%;-webkit-text-stroke:0.450px currentColor;">38</span>
<span class="t" style="top:385.95px;font-size:9.1px;line-height:11.83px;color:#2b2b2b;right:439px;transform:scaleX(0.8850);transform-origin:100% 50%;-webkit-text-stroke:0.450px currentColor;">1,80</span>
<div class="a" style="left:797.2px;top:384.2px;width:62px;height:14.02px;background:#d64554;"></div>
<div class="a" style="left:797.2px;top:397px;width:62px;height:1px;background:rgba(255,255,255,0.600);"></div>
<span class="t" style="top:385.95px;font-size:9.1px;line-height:11.83px;color:#6a0f1c;right:376.20000000000005px;transform:scaleX(0.8850);transform-origin:100% 50%;-webkit-text-stroke:0.450px currentColor;">7,80</span>
<span class="t" style="top:385.95px;font-size:9.1px;line-height:11.83px;color:#2b2b2b;right:321px;transform:scaleX(0.8850);transform-origin:100% 50%;-webkit-text-stroke:0.450px currentColor;">54,40</span>
<span class="t" style="top:399.67px;font-size:9.1px;line-height:11.83px;color:#2b2b2b;left:179.2px;transform:scaleX(0.8850);transform-origin:0 50%;-webkit-text-stroke:0.450px currentColor;">005</span>
<span class="t" style="top:399.67px;font-size:9.1px;line-height:11.83px;color:#2b2b2b;left:222.5px;transform:scaleX(0.8850);transform-origin:0 50%;-webkit-text-stroke:0.450px currentColor;">% ROSCALATA</span>
<span class="t" style="top:399.67px;font-size:9.1px;line-height:11.83px;color:#2b2b2b;left:335.5px;transform:scaleX(0.8850);transform-origin:0 50%;-webkit-text-stroke:0.450px currentColor;">5/8 X 8</span>
<span class="t" style="top:399.67px;font-size:9.1px;line-height:11.83px;color:#2b2b2b;right:725.2px;transform:scaleX(0.8850);transform-origin:100% 50%;-webkit-text-stroke:0.450px currentColor;">1353</span>
<span class="t" style="top:399.67px;font-size:9.1px;line-height:11.83px;color:#2b2b2b;right:674.2px;transform:scaleX(0.8850);transform-origin:100% 50%;-webkit-text-stroke:0.450px currentColor;">0</span>
<span class="t" style="top:399.67px;font-size:9.1px;line-height:11.83px;color:#2b2b2b;right:606.4px;transform:scaleX(0.8850);transform-origin:100% 50%;-webkit-text-stroke:0.450px currentColor;">1353</span>
<span class="t" style="top:399.67px;font-size:9.1px;line-height:11.83px;color:#2b2b2b;right:508.5px;transform:scaleX(0.8850);transform-origin:100% 50%;-webkit-text-stroke:0.450px currentColor;">415</span>
<span class="t" style="top:399.67px;font-size:9.1px;line-height:11.83px;color:#2b2b2b;right:439px;transform:scaleX(0.8850);transform-origin:100% 50%;-webkit-text-stroke:0.450px currentColor;">3,30</span>
<div class="a" style="left:797.2px;top:397.92px;width:62px;height:14.02px;background:#d64554;"></div>
<div class="a" style="left:797.2px;top:411px;width:62px;height:1px;background:rgba(255,255,255,0.600);"></div>
<span class="t" style="top:399.67px;font-size:9.1px;line-height:11.83px;color:#6a0f1c;right:376.20000000000005px;transform:scaleX(0.8850);transform-origin:100% 50%;-webkit-text-stroke:0.450px currentColor;">14,10</span>
<span class="t" style="top:399.67px;font-size:9.1px;line-height:11.83px;color:#2b2b2b;right:321px;transform:scaleX(0.8850);transform-origin:100% 50%;-webkit-text-stroke:0.450px currentColor;">99,20</span>
<div class="a" style="left:175px;top:411.64px;width:739.3px;height:13.72px;background:#ededed;"></div>
<span class="t" style="top:413.39px;font-size:9.1px;line-height:11.83px;color:#2b2b2b;left:179.2px;transform:scaleX(0.8850);transform-origin:0 50%;-webkit-text-stroke:0.450px currentColor;">006</span>
<span class="t" style="top:413.39px;font-size:9.1px;line-height:11.83px;color:#2b2b2b;left:222.5px;transform:scaleX(0.8850);transform-origin:0 50%;-webkit-text-stroke:0.450px currentColor;">% ROSCALATA</span>
<span class="t" style="top:413.39px;font-size:9.1px;line-height:11.83px;color:#2b2b2b;left:335.5px;transform:scaleX(0.8850);transform-origin:0 50%;-webkit-text-stroke:0.450px currentColor;">5/8 x 10</span>
<span class="t" style="top:413.39px;font-size:9.1px;line-height:11.83px;color:#2b2b2b;right:725.2px;transform:scaleX(0.8850);transform-origin:100% 50%;-webkit-text-stroke:0.450px currentColor;">4</span>
<span class="t" style="top:413.39px;font-size:9.1px;line-height:11.83px;color:#2b2b2b;right:674.2px;transform:scaleX(0.8850);transform-origin:100% 50%;-webkit-text-stroke:0.450px currentColor;">0</span>
<span class="t" style="top:413.39px;font-size:9.1px;line-height:11.83px;color:#2b2b2b;right:606.4px;transform:scaleX(0.8850);transform-origin:100% 50%;-webkit-text-stroke:0.450px currentColor;">4</span>
<span class="t" style="top:413.39px;font-size:9.1px;line-height:11.83px;color:#2b2b2b;right:508.5px;transform:scaleX(0.8850);transform-origin:100% 50%;-webkit-text-stroke:0.450px currentColor;">10</span>
<span class="t" style="top:413.39px;font-size:9.1px;line-height:11.83px;color:#2b2b2b;right:439px;transform:scaleX(0.8850);transform-origin:100% 50%;-webkit-text-stroke:0.450px currentColor;">0,40</span>
<div class="a" style="left:797.2px;top:411.64px;width:62px;height:14.02px;background:#d64554;"></div>
<div class="a" style="left:797.2px;top:424px;width:62px;height:1px;background:rgba(255,255,255,0.600);"></div>
<span class="t" style="top:413.39px;font-size:9.1px;line-height:11.83px;color:#6a0f1c;right:376.20000000000005px;transform:scaleX(0.8850);transform-origin:100% 50%;-webkit-text-stroke:0.450px currentColor;">1,70</span>
<span class="t" style="top:413.39px;font-size:9.1px;line-height:11.83px;color:#2b2b2b;right:321px;transform:scaleX(0.8850);transform-origin:100% 50%;-webkit-text-stroke:0.450px currentColor;">12,20</span>
<span class="t" style="top:427.11px;font-size:9.1px;line-height:11.83px;color:#2b2b2b;left:179.2px;transform:scaleX(0.8850);transform-origin:0 50%;-webkit-text-stroke:0.450px currentColor;">007</span>
<span class="t" style="top:427.11px;font-size:9.1px;line-height:11.83px;color:#2b2b2b;left:222.5px;transform:scaleX(0.8850);transform-origin:0 50%;-webkit-text-stroke:0.450px currentColor;">% ROSCALATA</span>
<span class="t" style="top:427.11px;font-size:9.1px;line-height:11.83px;color:#2b2b2b;left:335.5px;transform:scaleX(0.8850);transform-origin:0 50%;-webkit-text-stroke:0.450px currentColor;">3/4 X 6</span>
<span class="t" style="top:427.11px;font-size:9.1px;line-height:11.83px;color:#2b2b2b;right:725.2px;transform:scaleX(0.8850);transform-origin:100% 50%;-webkit-text-stroke:0.450px currentColor;">146</span>
<span class="t" style="top:427.11px;font-size:9.1px;line-height:11.83px;color:#2b2b2b;right:674.2px;transform:scaleX(0.8850);transform-origin:100% 50%;-webkit-text-stroke:0.450px currentColor;">0</span>
<span class="t" style="top:427.11px;font-size:9.1px;line-height:11.83px;color:#2b2b2b;right:606.4px;transform:scaleX(0.8850);transform-origin:100% 50%;-webkit-text-stroke:0.450px currentColor;">146</span>
<span class="t" style="top:427.11px;font-size:9.1px;line-height:11.83px;color:#2b2b2b;right:508.5px;transform:scaleX(0.8850);transform-origin:100% 50%;-webkit-text-stroke:0.450px currentColor;">4</span>
<span class="t" style="top:427.11px;font-size:9.1px;line-height:11.83px;color:#2b2b2b;right:439px;transform:scaleX(0.8850);transform-origin:100% 50%;-webkit-text-stroke:0.450px currentColor;">36,50</span>
<div class="a" style="left:797.2px;top:425.36px;width:62px;height:14.02px;background:#333333;"></div>
<div class="a" style="left:797.2px;top:438px;width:62px;height:1px;background:rgba(255,255,255,0.600);"></div>
<span class="t" style="top:427.11px;font-size:9.1px;line-height:11.83px;color:#ffffff;right:376.20000000000005px;transform:scaleX(0.8850);transform-origin:100% 50%;-webkit-text-stroke:0.450px currentColor;">158,20</span>
<span class="t" style="top:427.11px;font-size:9.1px;line-height:11.83px;color:#2b2b2b;right:321px;transform:scaleX(0.8850);transform-origin:100% 50%;-webkit-text-stroke:0.450px currentColor;">1.110,20</span>
<div class="a" style="left:175px;top:439.08px;width:739.3px;height:13.72px;background:#ededed;"></div>
<span class="t" style="top:440.83px;font-size:9.1px;line-height:11.83px;color:#2b2b2b;left:179.2px;transform:scaleX(0.8850);transform-origin:0 50%;-webkit-text-stroke:0.450px currentColor;">008</span>
<span class="t" style="top:440.83px;font-size:9.1px;line-height:11.83px;color:#2b2b2b;left:222.5px;transform:scaleX(0.8850);transform-origin:0 50%;-webkit-text-stroke:0.450px currentColor;">% ROSCALATA</span>
<span class="t" style="top:440.83px;font-size:9.1px;line-height:11.83px;color:#2b2b2b;left:335.5px;transform:scaleX(0.8850);transform-origin:0 50%;-webkit-text-stroke:0.450px currentColor;">3/4 X 8</span>
<span class="t" style="top:440.83px;font-size:9.1px;line-height:11.83px;color:#2b2b2b;right:725.2px;transform:scaleX(0.8850);transform-origin:100% 50%;-webkit-text-stroke:0.450px currentColor;">152</span>
<span class="t" style="top:440.83px;font-size:9.1px;line-height:11.83px;color:#2b2b2b;right:674.2px;transform:scaleX(0.8850);transform-origin:100% 50%;-webkit-text-stroke:0.450px currentColor;">0</span>
<span class="t" style="top:440.83px;font-size:9.1px;line-height:11.83px;color:#2b2b2b;right:606.4px;transform:scaleX(0.8850);transform-origin:100% 50%;-webkit-text-stroke:0.450px currentColor;">152</span>
<span class="t" style="top:440.83px;font-size:9.1px;line-height:11.83px;color:#2b2b2b;right:508.5px;transform:scaleX(0.8850);transform-origin:100% 50%;-webkit-text-stroke:0.450px currentColor;">10</span>
<span class="t" style="top:440.83px;font-size:9.1px;line-height:11.83px;color:#2b2b2b;right:439px;transform:scaleX(0.8850);transform-origin:100% 50%;-webkit-text-stroke:0.450px currentColor;">15,20</span>
<div class="a" style="left:797.2px;top:439.08px;width:62px;height:14.02px;background:#333333;"></div>
<div class="a" style="left:797.2px;top:452px;width:62px;height:1px;background:rgba(255,255,255,0.600);"></div>
<span class="t" style="top:440.83px;font-size:9.1px;line-height:11.83px;color:#ffffff;right:376.20000000000005px;transform:scaleX(0.8850);transform-origin:100% 50%;-webkit-text-stroke:0.450px currentColor;">65,90</span>
<span class="t" style="top:440.83px;font-size:9.1px;line-height:11.83px;color:#2b2b2b;right:321px;transform:scaleX(0.8850);transform-origin:100% 50%;-webkit-text-stroke:0.450px currentColor;">462,30</span>
<span class="t" style="top:454.55px;font-size:9.1px;line-height:11.83px;color:#2b2b2b;left:179.2px;transform:scaleX(0.8850);transform-origin:0 50%;-webkit-text-stroke:0.450px currentColor;">009</span>
<span class="t" style="top:454.55px;font-size:9.1px;line-height:11.83px;color:#2b2b2b;left:222.5px;transform:scaleX(0.8850);transform-origin:0 50%;-webkit-text-stroke:0.450px currentColor;">% ROSCALATA</span>
<span class="t" style="top:454.55px;font-size:9.1px;line-height:11.83px;color:#2b2b2b;left:335.5px;transform:scaleX(0.8850);transform-origin:0 50%;-webkit-text-stroke:0.450px currentColor;">3/4 X 10</span>
<span class="t" style="top:454.55px;font-size:9.1px;line-height:11.83px;color:#2b2b2b;right:725.2px;transform:scaleX(0.8850);transform-origin:100% 50%;-webkit-text-stroke:0.450px currentColor;">101</span>
<span class="t" style="top:454.55px;font-size:9.1px;line-height:11.83px;color:#2b2b2b;right:674.2px;transform:scaleX(0.8850);transform-origin:100% 50%;-webkit-text-stroke:0.450px currentColor;">0</span>
<span class="t" style="top:454.55px;font-size:9.1px;line-height:11.83px;color:#2b2b2b;right:606.4px;transform:scaleX(0.8850);transform-origin:100% 50%;-webkit-text-stroke:0.450px currentColor;">101</span>
<span class="t" style="top:454.55px;font-size:9.1px;line-height:11.83px;color:#2b2b2b;right:508.5px;transform:scaleX(0.8850);transform-origin:100% 50%;-webkit-text-stroke:0.450px currentColor;">4</span>
<span class="t" style="top:454.55px;font-size:9.1px;line-height:11.83px;color:#2b2b2b;right:439px;transform:scaleX(0.8850);transform-origin:100% 50%;-webkit-text-stroke:0.450px currentColor;">25,30</span>
<div class="a" style="left:797.2px;top:452.8px;width:62px;height:14.02px;background:#333333;"></div>
<div class="a" style="left:797.2px;top:466px;width:62px;height:1px;background:rgba(255,255,255,0.600);"></div>
<span class="t" style="top:454.55px;font-size:9.1px;line-height:11.83px;color:#ffffff;right:376.20000000000005px;transform:scaleX(0.8850);transform-origin:100% 50%;-webkit-text-stroke:0.450px currentColor;">109,40</span>
<span class="t" style="top:454.55px;font-size:9.1px;line-height:11.83px;color:#2b2b2b;right:321px;transform:scaleX(0.8850);transform-origin:100% 50%;-webkit-text-stroke:0.450px currentColor;">768,00</span>
<div class="a" style="left:175px;top:466.52px;width:739.3px;height:13.72px;background:#ededed;"></div>
<span class="t" style="top:468.27px;font-size:9.1px;line-height:11.83px;color:#2b2b2b;left:179.2px;transform:scaleX(0.8850);transform-origin:0 50%;-webkit-text-stroke:0.450px currentColor;">010</span>
<span class="t" style="top:468.27px;font-size:9.1px;line-height:11.83px;color:#2b2b2b;left:222.5px;transform:scaleX(0.8850);transform-origin:0 50%;-webkit-text-stroke:0.450px currentColor;">% ROSCALATA</span>
<span class="t" style="top:468.27px;font-size:9.1px;line-height:11.83px;color:#2b2b2b;left:335.5px;transform:scaleX(0.8850);transform-origin:0 50%;-webkit-text-stroke:0.450px currentColor;">1 X 6</span>
<span class="t" style="top:468.27px;font-size:9.1px;line-height:11.83px;color:#2b2b2b;right:725.2px;transform:scaleX(0.8850);transform-origin:100% 50%;-webkit-text-stroke:0.450px currentColor;">136</span>
<span class="t" style="top:468.27px;font-size:9.1px;line-height:11.83px;color:#2b2b2b;right:674.2px;transform:scaleX(0.8850);transform-origin:100% 50%;-webkit-text-stroke:0.450px currentColor;">0</span>
<span class="t" style="top:468.27px;font-size:9.1px;line-height:11.83px;color:#2b2b2b;right:606.4px;transform:scaleX(0.8850);transform-origin:100% 50%;-webkit-text-stroke:0.450px currentColor;">136</span>
<span class="t" style="top:468.27px;font-size:9.1px;line-height:11.83px;color:#2b2b2b;right:508.5px;transform:scaleX(0.8850);transform-origin:100% 50%;-webkit-text-stroke:0.450px currentColor;">23</span>
<span class="t" style="top:468.27px;font-size:9.1px;line-height:11.83px;color:#2b2b2b;right:439px;transform:scaleX(0.8850);transform-origin:100% 50%;-webkit-text-stroke:0.450px currentColor;">5,90</span>
<span class="t" style="top:468.27px;font-size:9.1px;line-height:11.83px;color:#2b2b2b;right:376.20000000000005px;transform:scaleX(0.8850);transform-origin:100% 50%;-webkit-text-stroke:0.450px currentColor;">25,60</span>
<span class="t" style="top:468.27px;font-size:9.1px;line-height:11.83px;color:#2b2b2b;right:321px;transform:scaleX(0.8850);transform-origin:100% 50%;-webkit-text-stroke:0.450px currentColor;">179,90</span>
<span class="t" style="top:481.99px;font-size:9.1px;line-height:11.83px;color:#2b2b2b;left:179.2px;transform:scaleX(0.8850);transform-origin:0 50%;-webkit-text-stroke:0.450px currentColor;">011</span>
<span class="t" style="top:481.99px;font-size:9.1px;line-height:11.83px;color:#2b2b2b;left:222.5px;transform:scaleX(0.8850);transform-origin:0 50%;-webkit-text-stroke:0.450px currentColor;">% ROSCALATA</span>
<span class="t" style="top:481.99px;font-size:9.1px;line-height:11.83px;color:#2b2b2b;left:335.5px;transform:scaleX(0.8850);transform-origin:0 50%;-webkit-text-stroke:0.450px currentColor;">1 X 8</span>
<span class="t" style="top:481.99px;font-size:9.1px;line-height:11.83px;color:#2b2b2b;right:725.2px;transform:scaleX(0.8850);transform-origin:100% 50%;-webkit-text-stroke:0.450px currentColor;">102</span>
<span class="t" style="top:481.99px;font-size:9.1px;line-height:11.83px;color:#2b2b2b;right:674.2px;transform:scaleX(0.8850);transform-origin:100% 50%;-webkit-text-stroke:0.450px currentColor;">0</span>
<span class="t" style="top:481.99px;font-size:9.1px;line-height:11.83px;color:#2b2b2b;right:606.4px;transform:scaleX(0.8850);transform-origin:100% 50%;-webkit-text-stroke:0.450px currentColor;">102</span>
<span class="t" style="top:481.99px;font-size:9.1px;line-height:11.83px;color:#2b2b2b;right:508.5px;transform:scaleX(0.8850);transform-origin:100% 50%;-webkit-text-stroke:0.450px currentColor;">80</span>
<span class="t" style="top:481.99px;font-size:9.1px;line-height:11.83px;color:#2b2b2b;right:439px;transform:scaleX(0.8850);transform-origin:100% 50%;-webkit-text-stroke:0.450px currentColor;">1,30</span>
<div class="a" style="left:797.2px;top:480.24px;width:62px;height:14.02px;background:#d64554;"></div>
<div class="a" style="left:797.2px;top:493px;width:62px;height:1px;background:rgba(255,255,255,0.600);"></div>
<span class="t" style="top:481.99px;font-size:9.1px;line-height:11.83px;color:#6a0f1c;right:376.20000000000005px;transform:scaleX(0.8850);transform-origin:100% 50%;-webkit-text-stroke:0.450px currentColor;">5,50</span>
<span class="t" style="top:481.99px;font-size:9.1px;line-height:11.83px;color:#2b2b2b;right:321px;transform:scaleX(0.8850);transform-origin:100% 50%;-webkit-text-stroke:0.450px currentColor;">38,80</span>
<div class="a" style="left:175px;top:493.96px;width:739.3px;height:13.72px;background:#ededed;"></div>
<span class="t" style="top:495.71px;font-size:9.1px;line-height:11.83px;color:#2b2b2b;left:179.2px;transform:scaleX(0.8850);transform-origin:0 50%;-webkit-text-stroke:0.450px currentColor;">0114</span>
<span class="t" style="top:495.71px;font-size:9.1px;line-height:11.83px;color:#2b2b2b;left:222.5px;transform:scaleX(0.8850);transform-origin:0 50%;-webkit-text-stroke:0.450px currentColor;">BIS PROVE C/S</span>
<span class="t" style="top:495.71px;font-size:9.1px;line-height:11.83px;color:#2b2b2b;left:335.5px;transform:scaleX(0.8850);transform-origin:0 50%;-webkit-text-stroke:0.450px currentColor;">RECTA PAR</span>
<span class="t" style="top:495.71px;font-size:9.1px;line-height:11.83px;color:#2b2b2b;right:725.2px;transform:scaleX(0.8850);transform-origin:100% 50%;-webkit-text-stroke:0.450px currentColor;">35388</span>
<span class="t" style="top:495.71px;font-size:9.1px;line-height:11.83px;color:#2b2b2b;right:674.2px;transform:scaleX(0.8850);transform-origin:100% 50%;-webkit-text-stroke:0.450px currentColor;">29238</span>
<span class="t" style="top:495.71px;font-size:9.1px;line-height:11.83px;color:#2b2b2b;right:606.4px;transform:scaleX(0.8850);transform-origin:100% 50%;-webkit-text-stroke:0.450px currentColor;">6150</span>
<span class="t" style="top:495.71px;font-size:9.1px;line-height:11.83px;color:#2b2b2b;right:508.5px;transform:scaleX(0.8850);transform-origin:100% 50%;-webkit-text-stroke:0.450px currentColor;">1395</span>
<span class="t" style="top:495.71px;font-size:9.1px;line-height:11.83px;color:#2b2b2b;right:439px;transform:scaleX(0.8850);transform-origin:100% 50%;-webkit-text-stroke:0.450px currentColor;">25,40</span>
<div class="a" style="left:797.2px;top:493.96px;width:62px;height:14.02px;background:#333333;"></div>
<div class="a" style="left:797.2px;top:507px;width:62px;height:1px;background:rgba(255,255,255,0.600);"></div>
<span class="t" style="top:495.71px;font-size:9.1px;line-height:11.83px;color:#ffffff;right:376.20000000000005px;transform:scaleX(0.8850);transform-origin:100% 50%;-webkit-text-stroke:0.450px currentColor;">109,90</span>
<span class="t" style="top:495.71px;font-size:9.1px;line-height:11.83px;color:#2b2b2b;right:321px;transform:scaleX(0.8850);transform-origin:100% 50%;-webkit-text-stroke:0.450px currentColor;">771,60</span>
<span class="t" style="top:509.43px;font-size:9.1px;line-height:11.83px;color:#2b2b2b;left:179.2px;transform:scaleX(0.8850);transform-origin:0 50%;-webkit-text-stroke:0.450px currentColor;">012</span>
<span class="t" style="top:509.43px;font-size:9.1px;line-height:11.83px;color:#2b2b2b;left:222.5px;transform:scaleX(0.8850);transform-origin:0 50%;-webkit-text-stroke:0.450px currentColor;">% ROSCALATA</span>
<span class="t" style="top:509.43px;font-size:9.1px;line-height:11.83px;color:#2b2b2b;left:335.5px;transform:scaleX(0.8850);transform-origin:0 50%;-webkit-text-stroke:0.450px currentColor;">1 X 10</span>
<span class="t" style="top:509.43px;font-size:9.1px;line-height:11.83px;color:#2b2b2b;right:725.2px;transform:scaleX(0.8850);transform-origin:100% 50%;-webkit-text-stroke:0.450px currentColor;">110</span>
<span class="t" style="top:509.43px;font-size:9.1px;line-height:11.83px;color:#2b2b2b;right:674.2px;transform:scaleX(0.8850);transform-origin:100% 50%;-webkit-text-stroke:0.450px currentColor;">0</span>
<span class="t" style="top:509.43px;font-size:9.1px;line-height:11.83px;color:#2b2b2b;right:606.4px;transform:scaleX(0.8850);transform-origin:100% 50%;-webkit-text-stroke:0.450px currentColor;">110</span>
<span class="t" style="top:509.43px;font-size:9.1px;line-height:11.83px;color:#2b2b2b;right:508.5px;transform:scaleX(0.8850);transform-origin:100% 50%;-webkit-text-stroke:0.450px currentColor;">0</span>
<span class="t" style="top:509.43px;font-size:9.1px;line-height:11.83px;color:#2b2b2b;right:439px;transform:scaleX(0.8850);transform-origin:100% 50%;-webkit-text-stroke:0.450px currentColor;">-99,00</span>
<div class="a" style="left:797.2px;top:507.68px;width:62px;height:14.02px;background:#f6f9d4;"></div>
<div class="a" style="left:797.2px;top:520px;width:62px;height:1px;background:rgba(255,255,255,0.600);"></div>
<span class="t" style="top:509.43px;font-size:9.1px;line-height:11.83px;color:#5a5a3c;right:376.20000000000005px;transform:scaleX(0.8850);transform-origin:100% 50%;-webkit-text-stroke:0.450px currentColor;">-429,00</span>
<span class="t" style="top:509.43px;font-size:9.1px;line-height:11.83px;color:#2b2b2b;right:321px;transform:scaleX(0.8850);transform-origin:100% 50%;-webkit-text-stroke:0.450px currentColor;">-3.011,30</span>
<div class="a" style="left:175px;top:521.4px;width:739.3px;height:13.72px;background:#ededed;"></div>
<span class="t" style="top:523.15px;font-size:9.1px;line-height:11.83px;color:#2b2b2b;left:179.2px;transform:scaleX(0.8850);transform-origin:0 50%;-webkit-text-stroke:0.450px currentColor;">013</span>
<span class="t" style="top:523.15px;font-size:9.1px;line-height:11.83px;color:#2b2b2b;left:222.5px;transform:scaleX(0.8850);transform-origin:0 50%;-webkit-text-stroke:0.450px currentColor;">% ROSCALATA</span>
<span class="t" style="top:523.15px;font-size:9.1px;line-height:11.83px;color:#2b2b2b;left:335.5px;transform:scaleX(0.8850);transform-origin:0 50%;-webkit-text-stroke:0.450px currentColor;">11/4 X 8</span>
<span class="t" style="top:523.15px;font-size:9.1px;line-height:11.83px;color:#2b2b2b;right:725.2px;transform:scaleX(0.8850);transform-origin:100% 50%;-webkit-text-stroke:0.450px currentColor;">64</span>
<span class="t" style="top:523.15px;font-size:9.1px;line-height:11.83px;color:#2b2b2b;right:674.2px;transform:scaleX(0.8850);transform-origin:100% 50%;-webkit-text-stroke:0.450px currentColor;">0</span>
<span class="t" style="top:523.15px;font-size:9.1px;line-height:11.83px;color:#2b2b2b;right:606.4px;transform:scaleX(0.8850);transform-origin:100% 50%;-webkit-text-stroke:0.450px currentColor;">64</span>
<span class="t" style="top:523.15px;font-size:9.1px;line-height:11.83px;color:#2b2b2b;right:508.5px;transform:scaleX(0.8850);transform-origin:100% 50%;-webkit-text-stroke:0.450px currentColor;">11</span>
<span class="t" style="top:523.15px;font-size:9.1px;line-height:11.83px;color:#2b2b2b;right:439px;transform:scaleX(0.8850);transform-origin:100% 50%;-webkit-text-stroke:0.450px currentColor;">5,80</span>
<span class="t" style="top:523.15px;font-size:9.1px;line-height:11.83px;color:#2b2b2b;right:376.20000000000005px;transform:scaleX(0.8850);transform-origin:100% 50%;-webkit-text-stroke:0.450px currentColor;">25,20</span>
<span class="t" style="top:523.15px;font-size:9.1px;line-height:11.83px;color:#2b2b2b;right:321px;transform:scaleX(0.8850);transform-origin:100% 50%;-webkit-text-stroke:0.450px currentColor;">177,00</span>
<span class="t" style="top:536.87px;font-size:9.1px;line-height:11.83px;color:#2b2b2b;left:179.2px;transform:scaleX(0.8850);transform-origin:0 50%;-webkit-text-stroke:0.450px currentColor;">014</span>
<span class="t" style="top:536.87px;font-size:9.1px;line-height:11.83px;color:#2b2b2b;left:222.5px;transform:scaleX(0.8850);transform-origin:0 50%;-webkit-text-stroke:0.450px currentColor;">% ROSCALATA</span>
<span class="t" style="top:536.87px;font-size:9.1px;line-height:11.83px;color:#2b2b2b;left:335.5px;transform:scaleX(0.8850);transform-origin:0 50%;-webkit-text-stroke:0.450px currentColor;">11/2 X 6</span>
<span class="t" style="top:536.87px;font-size:9.1px;line-height:11.83px;color:#2b2b2b;right:725.2px;transform:scaleX(0.8850);transform-origin:100% 50%;-webkit-text-stroke:0.450px currentColor;">82</span>
<span class="t" style="top:536.87px;font-size:9.1px;line-height:11.83px;color:#2b2b2b;right:674.2px;transform:scaleX(0.8850);transform-origin:100% 50%;-webkit-text-stroke:0.450px currentColor;">0</span>
<span class="t" style="top:536.87px;font-size:9.1px;line-height:11.83px;color:#2b2b2b;right:606.4px;transform:scaleX(0.8850);transform-origin:100% 50%;-webkit-text-stroke:0.450px currentColor;">82</span>
<span class="t" style="top:536.87px;font-size:9.1px;line-height:11.83px;color:#2b2b2b;right:508.5px;transform:scaleX(0.8850);transform-origin:100% 50%;-webkit-text-stroke:0.450px currentColor;">0</span>
<span class="t" style="top:536.87px;font-size:9.1px;line-height:11.83px;color:#2b2b2b;right:439px;transform:scaleX(0.8850);transform-origin:100% 50%;-webkit-text-stroke:0.450px currentColor;">-99,00</span>
<div class="a" style="left:797.2px;top:535.12px;width:62px;height:14.02px;background:#f6f9d4;"></div>
<div class="a" style="left:797.2px;top:548px;width:62px;height:1px;background:rgba(255,255,255,0.600);"></div>
<span class="t" style="top:536.87px;font-size:9.1px;line-height:11.83px;color:#5a5a3c;right:376.20000000000005px;transform:scaleX(0.8850);transform-origin:100% 50%;-webkit-text-stroke:0.450px currentColor;">-429,00</span>
<span class="t" style="top:536.87px;font-size:9.1px;line-height:11.83px;color:#2b2b2b;right:321px;transform:scaleX(0.8850);transform-origin:100% 50%;-webkit-text-stroke:0.450px currentColor;">-3.011,30</span>
<div class="a" style="left:175px;top:548.84px;width:739.3px;height:13.72px;background:#ededed;"></div>
<span class="t" style="top:550.59px;font-size:9.1px;line-height:11.83px;color:#2b2b2b;left:179.2px;transform:scaleX(0.8850);transform-origin:0 50%;-webkit-text-stroke:0.450px currentColor;">015</span>
<span class="t" style="top:550.59px;font-size:9.1px;line-height:11.83px;color:#2b2b2b;left:222.5px;transform:scaleX(0.8850);transform-origin:0 50%;-webkit-text-stroke:0.450px currentColor;">% ROSCALATA</span>
<span class="t" style="top:550.59px;font-size:9.1px;line-height:11.83px;color:#2b2b2b;left:335.5px;transform:scaleX(0.8850);transform-origin:0 50%;-webkit-text-stroke:0.450px currentColor;">11/2 X 8</span>
<span class="t" style="top:550.59px;font-size:9.1px;line-height:11.83px;color:#2b2b2b;right:725.2px;transform:scaleX(0.8850);transform-origin:100% 50%;-webkit-text-stroke:0.450px currentColor;">96</span>
<span class="t" style="top:550.59px;font-size:9.1px;line-height:11.83px;color:#2b2b2b;right:674.2px;transform:scaleX(0.8850);transform-origin:100% 50%;-webkit-text-stroke:0.450px currentColor;">0</span>
<span class="t" style="top:550.59px;font-size:9.1px;line-height:11.83px;color:#2b2b2b;right:606.4px;transform:scaleX(0.8850);transform-origin:100% 50%;-webkit-text-stroke:0.450px currentColor;">96</span>
<span class="t" style="top:550.59px;font-size:9.1px;line-height:11.83px;color:#2b2b2b;right:508.5px;transform:scaleX(0.8850);transform-origin:100% 50%;-webkit-text-stroke:0.450px currentColor;">5</span>
<span class="t" style="top:550.59px;font-size:9.1px;line-height:11.83px;color:#2b2b2b;right:439px;transform:scaleX(0.8850);transform-origin:100% 50%;-webkit-text-stroke:0.450px currentColor;">19,20</span>
<div class="a" style="left:797.2px;top:548.84px;width:62px;height:14.02px;background:#333333;"></div>
<div class="a" style="left:797.2px;top:562px;width:62px;height:1px;background:rgba(255,255,255,0.600);"></div>
<span class="t" style="top:550.59px;font-size:9.1px;line-height:11.83px;color:#ffffff;right:376.20000000000005px;transform:scaleX(0.8850);transform-origin:100% 50%;-webkit-text-stroke:0.450px currentColor;">83,20</span>
<span class="t" style="top:550.59px;font-size:9.1px;line-height:11.83px;color:#2b2b2b;right:321px;transform:scaleX(0.8850);transform-origin:100% 50%;-webkit-text-stroke:0.450px currentColor;">584,00</span>
<span class="t" style="top:564.31px;font-size:9.1px;line-height:11.83px;color:#2b2b2b;left:179.2px;transform:scaleX(0.8850);transform-origin:0 50%;-webkit-text-stroke:0.450px currentColor;">016</span>
<span class="t" style="top:564.31px;font-size:9.1px;line-height:11.83px;color:#2b2b2b;left:222.5px;transform:scaleX(0.8850);transform-origin:0 50%;-webkit-text-stroke:0.450px currentColor;">% ROSCALATA</span>
<span class="t" style="top:564.31px;font-size:9.1px;line-height:11.83px;color:#2b2b2b;left:335.5px;transform:scaleX(0.8850);transform-origin:0 50%;-webkit-text-stroke:0.450px currentColor;">11/2 X 10</span>
<span class="t" style="top:564.31px;font-size:9.1px;line-height:11.83px;color:#2b2b2b;right:725.2px;transform:scaleX(0.8850);transform-origin:100% 50%;-webkit-text-stroke:0.450px currentColor;">57</span>
<span class="t" style="top:564.31px;font-size:9.1px;line-height:11.83px;color:#2b2b2b;right:674.2px;transform:scaleX(0.8850);transform-origin:100% 50%;-webkit-text-stroke:0.450px currentColor;">0</span>
<span class="t" style="top:564.31px;font-size:9.1px;line-height:11.83px;color:#2b2b2b;right:606.4px;transform:scaleX(0.8850);transform-origin:100% 50%;-webkit-text-stroke:0.450px currentColor;">57</span>
<span class="t" style="top:564.31px;font-size:9.1px;line-height:11.83px;color:#2b2b2b;right:508.5px;transform:scaleX(0.8850);transform-origin:100% 50%;-webkit-text-stroke:0.450px currentColor;">3</span>
<span class="t" style="top:564.31px;font-size:9.1px;line-height:11.83px;color:#2b2b2b;right:439px;transform:scaleX(0.8850);transform-origin:100% 50%;-webkit-text-stroke:0.450px currentColor;">19,00</span>
<div class="a" style="left:797.2px;top:562.56px;width:62px;height:14.02px;background:#333333;"></div>
<div class="a" style="left:797.2px;top:575px;width:62px;height:1px;background:rgba(255,255,255,0.600);"></div>
<span class="t" style="top:564.31px;font-size:9.1px;line-height:11.83px;color:#ffffff;right:376.20000000000005px;transform:scaleX(0.8850);transform-origin:100% 50%;-webkit-text-stroke:0.450px currentColor;">82,30</span>
<span class="t" style="top:564.31px;font-size:9.1px;line-height:11.83px;color:#2b2b2b;right:321px;transform:scaleX(0.8850);transform-origin:100% 50%;-webkit-text-stroke:0.450px currentColor;">577,90</span>
<div class="a" style="left:175px;top:576.28px;width:739.3px;height:13.72px;background:#ededed;"></div>
<span class="t" style="top:578.03px;font-size:9.1px;line-height:11.83px;color:#2b2b2b;left:179.2px;transform:scaleX(0.8850);transform-origin:0 50%;-webkit-text-stroke:0.450px currentColor;">017</span>
<span class="t" style="top:578.03px;font-size:9.1px;line-height:11.83px;color:#2b2b2b;left:222.5px;transform:scaleX(0.8850);transform-origin:0 50%;-webkit-text-stroke:0.450px currentColor;">% ROSCALATA</span>
<span class="t" style="top:578.03px;font-size:9.1px;line-height:11.83px;color:#2b2b2b;left:335.5px;transform:scaleX(0.8850);transform-origin:0 50%;-webkit-text-stroke:0.450px currentColor;">11/4 x 6</span>
<span class="t" style="top:578.03px;font-size:9.1px;line-height:11.83px;color:#2b2b2b;right:725.2px;transform:scaleX(0.8850);transform-origin:100% 50%;-webkit-text-stroke:0.450px currentColor;">75</span>
<span class="t" style="top:578.03px;font-size:9.1px;line-height:11.83px;color:#2b2b2b;right:674.2px;transform:scaleX(0.8850);transform-origin:100% 50%;-webkit-text-stroke:0.450px currentColor;">0</span>
<span class="t" style="top:578.03px;font-size:9.1px;line-height:11.83px;color:#2b2b2b;right:606.4px;transform:scaleX(0.8850);transform-origin:100% 50%;-webkit-text-stroke:0.450px currentColor;">75</span>
<span class="t" style="top:578.03px;font-size:9.1px;line-height:11.83px;color:#2b2b2b;right:508.5px;transform:scaleX(0.8850);transform-origin:100% 50%;-webkit-text-stroke:0.450px currentColor;">4</span>
<span class="t" style="top:578.03px;font-size:9.1px;line-height:11.83px;color:#2b2b2b;right:439px;transform:scaleX(0.8850);transform-origin:100% 50%;-webkit-text-stroke:0.450px currentColor;">18,80</span>
<div class="a" style="left:797.2px;top:576.28px;width:62px;height:14.02px;background:#333333;"></div>
<div class="a" style="left:797.2px;top:589px;width:62px;height:1px;background:rgba(255,255,255,0.600);"></div>
<span class="t" style="top:578.03px;font-size:9.1px;line-height:11.83px;color:#ffffff;right:376.20000000000005px;transform:scaleX(0.8850);transform-origin:100% 50%;-webkit-text-stroke:0.450px currentColor;">81,30</span>
<span class="t" style="top:578.03px;font-size:9.1px;line-height:11.83px;color:#2b2b2b;right:321px;transform:scaleX(0.8850);transform-origin:100% 50%;-webkit-text-stroke:0.450px currentColor;">570,30</span>
<span class="t" style="top:591.75px;font-size:9.1px;line-height:11.83px;color:#2b2b2b;left:179.2px;transform:scaleX(0.8850);transform-origin:0 50%;-webkit-text-stroke:0.450px currentColor;">018</span>
<span class="t" style="top:591.75px;font-size:9.1px;line-height:11.83px;color:#2b2b2b;left:222.5px;transform:scaleX(0.8850);transform-origin:0 50%;-webkit-text-stroke:0.450px currentColor;">% ROSCALATA</span>
<span class="t" style="top:591.75px;font-size:9.1px;line-height:11.83px;color:#2b2b2b;left:335.5px;transform:scaleX(0.8850);transform-origin:0 50%;-webkit-text-stroke:0.450px currentColor;">2 X 10</span>
<span class="t" style="top:591.75px;font-size:9.1px;line-height:11.83px;color:#2b2b2b;right:725.2px;transform:scaleX(0.8850);transform-origin:100% 50%;-webkit-text-stroke:0.450px currentColor;">113</span>
<span class="t" style="top:591.75px;font-size:9.1px;line-height:11.83px;color:#2b2b2b;right:674.2px;transform:scaleX(0.8850);transform-origin:100% 50%;-webkit-text-stroke:0.450px currentColor;">0</span>
<span class="t" style="top:591.75px;font-size:9.1px;line-height:11.83px;color:#2b2b2b;right:606.4px;transform:scaleX(0.8850);transform-origin:100% 50%;-webkit-text-stroke:0.450px currentColor;">113</span>
<span class="t" style="top:591.75px;font-size:9.1px;line-height:11.83px;color:#2b2b2b;right:508.5px;transform:scaleX(0.8850);transform-origin:100% 50%;-webkit-text-stroke:0.450px currentColor;">1</span>
<span class="t" style="top:591.75px;font-size:9.1px;line-height:11.83px;color:#2b2b2b;right:439px;transform:scaleX(0.8850);transform-origin:100% 50%;-webkit-text-stroke:0.450px currentColor;">113,00</span>
<div class="a" style="left:797.2px;top:590.0px;width:62px;height:14.02px;background:#333333;"></div>
<div class="a" style="left:797.2px;top:603px;width:62px;height:1px;background:rgba(255,255,255,0.600);"></div>
<span class="t" style="top:591.75px;font-size:9.1px;line-height:11.83px;color:#ffffff;right:376.20000000000005px;transform:scaleX(0.8850);transform-origin:100% 50%;-webkit-text-stroke:0.450px currentColor;">489,70</span>
<span class="t" style="top:591.75px;font-size:9.1px;line-height:11.83px;color:#2b2b2b;right:321px;transform:scaleX(0.8850);transform-origin:100% 50%;-webkit-text-stroke:0.450px currentColor;">3.437,10</span>
<div class="a" style="left:175px;top:603.72px;width:739.3px;height:13.72px;background:#ededed;"></div>
<span class="t" style="top:605.47px;font-size:9.1px;line-height:11.83px;color:#2b2b2b;left:179.2px;transform:scaleX(0.8850);transform-origin:0 50%;-webkit-text-stroke:0.450px currentColor;">037-BK</span>
<span class="t" style="top:605.47px;font-size:9.1px;line-height:11.83px;color:#2b2b2b;left:222.5px;transform:scaleX(0.8850);transform-origin:0 50%;-webkit-text-stroke:0.450px currentColor;">ASA NEGRA</span>
<span class="t" style="top:605.47px;font-size:9.1px;line-height:11.83px;color:#2b2b2b;left:335.5px;transform:scaleX(0.8850);transform-origin:0 50%;-webkit-text-stroke:0.450px currentColor;">X-037 BK</span>
<span class="t" style="top:605.47px;font-size:9.1px;line-height:11.83px;color:#2b2b2b;right:725.2px;transform:scaleX(0.8850);transform-origin:100% 50%;-webkit-text-stroke:0.450px currentColor;">873</span>
<span class="t" style="top:605.47px;font-size:9.1px;line-height:11.83px;color:#2b2b2b;right:674.2px;transform:scaleX(0.8850);transform-origin:100% 50%;-webkit-text-stroke:0.450px currentColor;">0</span>
<span class="t" style="top:605.47px;font-size:9.1px;line-height:11.83px;color:#2b2b2b;right:606.4px;transform:scaleX(0.8850);transform-origin:100% 50%;-webkit-text-stroke:0.450px currentColor;">873</span>
<span class="t" style="top:605.47px;font-size:9.1px;line-height:11.83px;color:#2b2b2b;right:508.5px;transform:scaleX(0.8850);transform-origin:100% 50%;-webkit-text-stroke:0.450px currentColor;">10</span>
<span class="t" style="top:605.47px;font-size:9.1px;line-height:11.83px;color:#2b2b2b;right:439px;transform:scaleX(0.8850);transform-origin:100% 50%;-webkit-text-stroke:0.450px currentColor;">87,30</span>
<div class="a" style="left:797.2px;top:603.72px;width:62px;height:14.02px;background:#333333;"></div>
<div class="a" style="left:797.2px;top:616px;width:62px;height:1px;background:rgba(255,255,255,0.600);"></div>
<span class="t" style="top:605.47px;font-size:9.1px;line-height:11.83px;color:#ffffff;right:376.20000000000005px;transform:scaleX(0.8850);transform-origin:100% 50%;-webkit-text-stroke:0.450px currentColor;">378,30</span>
<span class="t" style="top:605.47px;font-size:9.1px;line-height:11.83px;color:#2b2b2b;right:321px;transform:scaleX(0.8850);transform-origin:100% 50%;-webkit-text-stroke:0.450px currentColor;">2.655,40</span>
<span class="t" style="top:619.19px;font-size:9.1px;line-height:11.83px;color:#2b2b2b;left:179.2px;transform:scaleX(0.8850);transform-origin:0 50%;-webkit-text-stroke:0.450px currentColor;">040-BK</span>
<span class="t" style="top:619.19px;font-size:9.1px;line-height:11.83px;color:#2b2b2b;left:222.5px;transform:scaleX(0.8850);transform-origin:0 50%;-webkit-text-stroke:0.450px currentColor;">ASA NEGRA</span>
<span class="t" style="top:619.19px;font-size:9.1px;line-height:11.83px;color:#2b2b2b;left:335.5px;transform:scaleX(0.8850);transform-origin:0 50%;-webkit-text-stroke:0.450px currentColor;">X-040 BK</span>
<span class="t" style="top:619.19px;font-size:9.1px;line-height:11.83px;color:#2b2b2b;right:725.2px;transform:scaleX(0.8850);transform-origin:100% 50%;-webkit-text-stroke:0.450px currentColor;">962</span>
<span class="t" style="top:619.19px;font-size:9.1px;line-height:11.83px;color:#2b2b2b;right:674.2px;transform:scaleX(0.8850);transform-origin:100% 50%;-webkit-text-stroke:0.450px currentColor;">0</span>
<span class="t" style="top:619.19px;font-size:9.1px;line-height:11.83px;color:#2b2b2b;right:606.4px;transform:scaleX(0.8850);transform-origin:100% 50%;-webkit-text-stroke:0.450px currentColor;">962</span>
<span class="t" style="top:619.19px;font-size:9.1px;line-height:11.83px;color:#2b2b2b;right:508.5px;transform:scaleX(0.8850);transform-origin:100% 50%;-webkit-text-stroke:0.450px currentColor;">3</span>
<span class="t" style="top:619.19px;font-size:9.1px;line-height:11.83px;color:#2b2b2b;right:439px;transform:scaleX(0.8850);transform-origin:100% 50%;-webkit-text-stroke:0.450px currentColor;">320,70</span>
<div class="a" style="left:797.2px;top:617.44px;width:62px;height:14.02px;background:#333333;"></div>
<div class="a" style="left:797.2px;top:630px;width:62px;height:1px;background:rgba(255,255,255,0.600);"></div>
<span class="t" style="top:619.19px;font-size:9.1px;line-height:11.83px;color:#ffffff;right:376.20000000000005px;transform:scaleX(0.8850);transform-origin:100% 50%;-webkit-text-stroke:0.450px currentColor;">1.389,60</span>
<span class="t" style="top:619.19px;font-size:9.1px;line-height:11.83px;color:#2b2b2b;right:321px;transform:scaleX(0.8850);transform-origin:100% 50%;-webkit-text-stroke:0.450px currentColor;">9.753,60</span>
<div class="a" style="left:175px;top:631.16px;width:739.3px;height:13.72px;background:#ededed;"></div>
<span class="t" style="top:632.91px;font-size:9.1px;line-height:11.83px;color:#2b2b2b;left:179.2px;transform:scaleX(0.8850);transform-origin:0 50%;-webkit-text-stroke:0.450px currentColor;">050010</span>
<span class="t" style="top:632.91px;font-size:9.1px;line-height:11.83px;color:#2b2b2b;left:222.5px;transform:scaleX(0.8850);transform-origin:0 50%;-webkit-text-stroke:0.450px currentColor;">SIERRA CALADORA SNC</span>
<span class="t" style="top:632.91px;font-size:9.1px;line-height:11.83px;color:#2b2b2b;left:335.5px;transform:scaleX(0.8850);transform-origin:0 50%;-webkit-text-stroke:0.450px currentColor;">3-1/2 X 6T 2 UNIDADES</span>
<span class="t" style="top:632.91px;font-size:9.1px;line-height:11.83px;color:#2b2b2b;right:725.2px;transform:scaleX(0.8850);transform-origin:100% 50%;-webkit-text-stroke:0.450px currentColor;">870</span>
<span class="t" style="top:632.91px;font-size:9.1px;line-height:11.83px;color:#2b2b2b;right:674.2px;transform:scaleX(0.8850);transform-origin:100% 50%;-webkit-text-stroke:0.450px currentColor;">0</span>
<span class="t" style="top:632.91px;font-size:9.1px;line-height:11.83px;color:#2b2b2b;right:606.4px;transform:scaleX(0.8850);transform-origin:100% 50%;-webkit-text-stroke:0.450px currentColor;">870</span>
<span class="t" style="top:632.91px;font-size:9.1px;line-height:11.83px;color:#2b2b2b;right:508.5px;transform:scaleX(0.8850);transform-origin:100% 50%;-webkit-text-stroke:0.450px currentColor;">6</span>
<span class="t" style="top:632.91px;font-size:9.1px;line-height:11.83px;color:#2b2b2b;right:439px;transform:scaleX(0.8850);transform-origin:100% 50%;-webkit-text-stroke:0.450px currentColor;">145,00</span>
<div class="a" style="left:797.2px;top:631.16px;width:62px;height:14.02px;background:#333333;"></div>
<div class="a" style="left:797.2px;top:644px;width:62px;height:1px;background:rgba(255,255,255,0.600);"></div>
<span class="t" style="top:632.91px;font-size:9.1px;line-height:11.83px;color:#ffffff;right:376.20000000000005px;transform:scaleX(0.8850);transform-origin:100% 50%;-webkit-text-stroke:0.450px currentColor;">628,30</span>
<span class="t" style="top:632.91px;font-size:9.1px;line-height:11.83px;color:#2b2b2b;right:321px;transform:scaleX(0.8850);transform-origin:100% 50%;-webkit-text-stroke:0.450px currentColor;">4.410,40</span>
<span class="t" style="top:646.63px;font-size:9.1px;line-height:11.83px;color:#2b2b2b;left:179.2px;transform:scaleX(0.8850);transform-origin:0 50%;-webkit-text-stroke:0.450px currentColor;">050011</span>
<span class="t" style="top:646.63px;font-size:9.1px;line-height:11.83px;color:#2b2b2b;left:222.5px;transform:scaleX(0.8850);transform-origin:0 50%;-webkit-text-stroke:0.450px currentColor;">SIERRA CALADORA SNC</span>
<span class="t" style="top:646.63px;font-size:9.1px;line-height:11.83px;color:#2b2b2b;left:335.5px;transform:scaleX(0.8850);transform-origin:0 50%;-webkit-text-stroke:0.450px currentColor;">3-1/2 X 10/14T 2 UNIDADES</span>
<span class="t" style="top:646.63px;font-size:9.1px;line-height:11.83px;color:#2b2b2b;right:725.2px;transform:scaleX(0.8850);transform-origin:100% 50%;-webkit-text-stroke:0.450px currentColor;">818</span>
<span class="t" style="top:646.63px;font-size:9.1px;line-height:11.83px;color:#2b2b2b;right:674.2px;transform:scaleX(0.8850);transform-origin:100% 50%;-webkit-text-stroke:0.450px currentColor;">0</span>
<span class="t" style="top:646.63px;font-size:9.1px;line-height:11.83px;color:#2b2b2b;right:606.4px;transform:scaleX(0.8850);transform-origin:100% 50%;-webkit-text-stroke:0.450px currentColor;">818</span>
<span class="t" style="top:646.63px;font-size:9.1px;line-height:11.83px;color:#2b2b2b;right:508.5px;transform:scaleX(0.8850);transform-origin:100% 50%;-webkit-text-stroke:0.450px currentColor;">7</span>
<span class="t" style="top:646.63px;font-size:9.1px;line-height:11.83px;color:#2b2b2b;right:439px;transform:scaleX(0.8850);transform-origin:100% 50%;-webkit-text-stroke:0.450px currentColor;">116,90</span>
<div class="a" style="left:797.2px;top:644.88px;width:62px;height:14.02px;background:#333333;"></div>
<div class="a" style="left:797.2px;top:658px;width:62px;height:1px;background:rgba(255,255,255,0.600);"></div>
<span class="t" style="top:646.63px;font-size:9.1px;line-height:11.83px;color:#ffffff;right:376.20000000000005px;transform:scaleX(0.8850);transform-origin:100% 50%;-webkit-text-stroke:0.450px currentColor;">506,40</span>
<span class="t" style="top:646.63px;font-size:9.1px;line-height:11.83px;color:#2b2b2b;right:321px;transform:scaleX(0.8850);transform-origin:100% 50%;-webkit-text-stroke:0.450px currentColor;">3.554,40</span>
<div class="a" style="left:175px;top:658.6px;width:739.3px;height:13.72px;background:#ededed;"></div>
<span class="t" style="top:660.35px;font-size:9.1px;line-height:11.83px;color:#2b2b2b;left:179.2px;transform:scaleX(0.8850);transform-origin:0 50%;-webkit-text-stroke:0.450px currentColor;">050012</span>
<span class="t" style="top:660.35px;font-size:9.1px;line-height:11.83px;color:#2b2b2b;left:222.5px;transform:scaleX(0.8850);transform-origin:0 50%;-webkit-text-stroke:0.450px currentColor;">SIERRA CALADORA SNC</span>
<span class="t" style="top:660.35px;font-size:9.1px;line-height:11.83px;color:#2b2b2b;left:335.5px;transform:scaleX(0.8850);transform-origin:0 50%;-webkit-text-stroke:0.450px currentColor;">3-1/2 X 12T 2 UNIDADES</span>
<span class="t" style="top:660.35px;font-size:9.1px;line-height:11.83px;color:#2b2b2b;right:725.2px;transform:scaleX(0.8850);transform-origin:100% 50%;-webkit-text-stroke:0.450px currentColor;">671</span>
<span class="t" style="top:660.35px;font-size:9.1px;line-height:11.83px;color:#2b2b2b;right:674.2px;transform:scaleX(0.8850);transform-origin:100% 50%;-webkit-text-stroke:0.450px currentColor;">0</span>
<span class="t" style="top:660.35px;font-size:9.1px;line-height:11.83px;color:#2b2b2b;right:606.4px;transform:scaleX(0.8850);transform-origin:100% 50%;-webkit-text-stroke:0.450px currentColor;">671</span>
<span class="t" style="top:660.35px;font-size:9.1px;line-height:11.83px;color:#2b2b2b;right:508.5px;transform:scaleX(0.8850);transform-origin:100% 50%;-webkit-text-stroke:0.450px currentColor;">15</span>
<span class="t" style="top:660.35px;font-size:9.1px;line-height:11.83px;color:#2b2b2b;right:439px;transform:scaleX(0.8850);transform-origin:100% 50%;-webkit-text-stroke:0.450px currentColor;">44,70</span>
<div class="a" style="left:797.2px;top:658.6px;width:62px;height:14.02px;background:#333333;"></div>
<div class="a" style="left:797.2px;top:671px;width:62px;height:1px;background:rgba(255,255,255,0.600);"></div>
<span class="t" style="top:660.35px;font-size:9.1px;line-height:11.83px;color:#ffffff;right:376.20000000000005px;transform:scaleX(0.8850);transform-origin:100% 50%;-webkit-text-stroke:0.450px currentColor;">193,80</span>
<span class="t" style="top:660.35px;font-size:9.1px;line-height:11.83px;color:#2b2b2b;right:321px;transform:scaleX(0.8850);transform-origin:100% 50%;-webkit-text-stroke:0.450px currentColor;">1.360,60</span>
<div class="a" style="left:797.2px;top:672.32px;width:62px;height:2.2px;background:#333333;"></div>
<div class="a" style="left:175px;top:673.8px;width:739.3px;height:1.2px;background:#6db6ea;"></div>
<div class="a" style="left:175px;top:675px;width:739.3px;height:14px;background:#fff;"></div>
<span class="t" style="top:676.19px;font-size:9.1px;line-height:11.83px;color:#252423;left:179.2px;transform:scaleX(0.9625);transform-origin:0 50%;-webkit-text-stroke:0.300px #252423;">Total</span>
<span class="t" style="top:676.19px;font-size:9.1px;line-height:11.83px;color:#2b2b2b;right:674.2px;transform:scaleX(0.8850);transform-origin:100% 50%;-webkit-text-stroke:0.450px currentColor;">605490</span>
<span class="t" style="top:676.19px;font-size:9.1px;line-height:11.83px;color:#2b2b2b;right:606.4px;transform:scaleX(0.8850);transform-origin:100% 50%;-webkit-text-stroke:0.450px currentColor;">402159</span>
<div class="a" style="left:0px;top:730px;width:1232px;height:30.6px;background:linear-gradient(90deg,#dbe6f4 0%,#dfe9f5 35%,#e5eef9 75%,#e2ecf8 100%);border-top:1px solid #d6deea;"></div>
<div class="a" style="left:0px;top:760.5px;width:1232px;height:39.5px;background:linear-gradient(180deg,#808080 0%,#7a7a7a 20%,#6a6a6a 60%,#5e5e5e 100%);"></div>
<div class="a" style="left:0px;top:760.5px;width:1232px;height:1px;background:#6c6c6c;"></div>
<svg class="a" style="left:11px;top:738px;" width="18" height="14" viewBox="0 0 18 14"><defs><linearGradient id="cl" x1="0" y1="0" x2="0" y2="1"><stop offset="0" stop-color="#a9c4f2"/><stop offset="1" stop-color="#dbe7fb"/></linearGradient></defs><path d="M4 11.400Q1 11.400 1 8.600Q1 6.200 3.600 6Q4.600 2.800 8 2.800Q11.400 2.800 12 6Q15.600 6.200 15.600 8.800Q15.600 11.400 12.600 11.400Z" fill="url(#cl)" stroke="#8db0ea" stroke-width="0.500"/><path d="M2.600 11.400H14" stroke="#6f9ae4" stroke-width="0.800"/><circle cx="13.400" cy="1.700" r="4.900" fill="#c9302a"/></svg>
<span class="t" style="top:735.15px;font-size:7px;line-height:9.1px;color:#fff;font-weight:bold;left:22.45px;transform:scaleX(0.9000);transform-origin:50% 50%;">1</span>
<span class="t" style="top:735.14px;font-size:8.4px;line-height:10.92px;color:#262626;left:32px;transform:scaleX(0.7993);transform-origin:0 50%;">16°C</span>
<span class="t" style="top:746.04px;font-size:8.4px;line-height:10.92px;color:#5f5f5f;left:32px;transform:scaleX(0.9588);transform-origin:0 50%;">Nublado</span>
<svg class="a" style="left:353.5px;top:738px;" width="15" height="15" viewBox="0 0 15 15"><defs><linearGradient id="wg" x1="0" y1="0" x2="1" y2="1"><stop offset="0" stop-color="#4db3f5"/><stop offset="1" stop-color="#0f6fd0"/></linearGradient></defs><path d="M0 0H7.100V7.100H0ZM7.900 0H15V7.100H7.900ZM0 7.900H7.100V15H0ZM7.900 7.900H15V15H7.900Z" fill="url(#wg)"/></svg>
<div class="a" style="left:376.5px;top:735.8px;width:140.5px;height:19.6px;background:#f6f9fd;border-radius:10px;border:1px solid #dde4ee;"></div>
<svg class="a" style="left:383.5px;top:741px;" width="9" height="9" viewBox="0 0 9 9"><circle cx="3.800" cy="3.800" r="3" stroke="#222" stroke-width="1.200" fill="none"/><path d="M6 6 8.500 8.500" stroke="#222" stroke-width="1.300"/></svg>
<span class="t" style="top:740.48px;font-size:8.8px;line-height:11.44px;color:#444;left:400px;transform:scaleX(0.9493);transform-origin:0 50%;">Buscar</span>
<svg class="a" style="left:525px;top:738.5px;" width="16" height="15" viewBox="0 0 16 15"><rect x="4.800" y="0.400" width="10.600" height="10.400" rx="1.300" fill="#f1f1f1" stroke="#c3c6cb" stroke-width="0.500"/><rect x="0.400" y="3.800" width="10" height="10.400" rx="1.300" fill="#1b1b1b"/><rect x="4.800" y="3.800" width="5.600" height="7" fill="#8d8d8d"/></svg>
<svg class="a" style="left:553px;top:738.5px;" width="15" height="15" viewBox="0 0 15 15"><path d="M7.500 0.800A6.700 6.700 0 1 1 3.600 12.900L0.800 14 1.900 11A6.700 6.700 0 0 1 7.500 0.800Z" fill="#5558c9"/><rect x="3.600" y="5" width="5.600" height="5" rx="1.200" fill="#fff"/><path d="M9.200 7 11.800 5.200V9.800L9.200 8Z" fill="#fff"/></svg>
<svg class="a" style="left:581.5px;top:738px;" width="15" height="15" viewBox="0 0 15 15"><circle cx="7.500" cy="7.500" r="7" fill="#1a78d0"/><path d="M0.800 8.800Q1 2 7.800 0.800Q13.400 1.200 14.400 6.800Q11 3.600 6.400 5.200Q2.400 6.800 4 11.600Q1.600 11.200 0.800 8.800Z" fill="#3ec6a2"/><path d="M5.400 9Q5.800 5.800 9 6Q11.600 6.400 11.200 9H6.800Q7.200 12.200 12 11.600Q8.800 15.200 4.800 13Q3.400 11.400 5.400 9Z" fill="#0b559f"/><rect x="0.800" y="9.400" width="6.800" height="5" rx="0.600" fill="#a85f1c"/><rect x="0.800" y="11" width="6.800" height="1.100" fill="#e9a63f"/></svg>
<svg class="a" style="left:609.5px;top:738.8px;" width="17" height="13.5" viewBox="0 0 17 13.5"><path d="M0.400 1.600Q0.400 0.400 1.600 0.400H6L7.600 2.200H15.400Q16.600 2.200 16.600 3.400V5H0.400Z" fill="#e3a21a"/><rect x="0.400" y="3.200" width="16.200" height="9.800" rx="1" fill="#fbd250"/><path d="M0.400 9.400H5L6 8.400H11L12 9.400H16.600V12Q16.600 13 15.600 13H1.400Q0.400 13 0.400 12Z" fill="#3589e0"/></svg>
<div class="a" style="left:615.5px;top:755.2px;width:4px;height:1.5px;background:#8c9098;border-radius:1px;"></div>
<svg class="a" style="left:638px;top:738px;" width="14" height="15" viewBox="0 0 14 15"><path d="M4.200 4V2.800Q4.200 0.800 7 0.800T9.800 2.800V4" stroke="#2b5fa6" stroke-width="1.100" fill="none"/><rect x="0.400" y="3.800" width="13.200" height="10.600" rx="1.600" fill="#174b8c"/><rect x="3.800" y="6.200" width="2.800" height="2.800" fill="#f25022"/><rect x="7.400" y="6.200" width="2.800" height="2.800" fill="#7fba00"/><rect x="3.800" y="9.800" width="2.800" height="2.800" fill="#00a4ef"/><rect x="7.400" y="9.800" width="2.800" height="2.800" fill="#ffb900"/></svg>
<svg class="a" style="left:666.8px;top:738px;" width="15" height="15" viewBox="0 0 15 15"><circle cx="7.500" cy="7.500" r="6.900" fill="#fafafa" stroke="#35b3ab" stroke-width="1.300"/><path d="M3.600 6.200Q4.400 4.200 6.600 4.600L7.600 3.800 8.200 5.200Q9.400 5.400 9.800 7L8.400 7.600 9 9.400 6.800 8.600Q4.800 9 3.600 6.200Z" fill="#cfcfcf"/><path d="M7.600 13.400Q7 9.400 9.800 7.200Q12.600 6.200 12.800 9.800Q11.600 13 7.600 13.400Z" fill="#1e1e1e"/><circle cx="6" cy="6.400" r="0.700" fill="#222"/><circle cx="8.400" cy="7.800" r="0.800" fill="#222"/></svg>
<svg class="a" style="left:694.7px;top:737.5px;" width="15.6" height="15.6" viewBox="0 0 15.6 15.6"><rect x="0" y="0.400" width="15.600" height="14.800" rx="1" fill="#1d4f91"/><rect x="8.400" y="0.800" width="5" height="14" fill="#e3a50b"/><rect x="4.800" y="4" width="5" height="10.800" fill="#f2c811"/><rect x="2" y="7.600" width="4" height="7.200" fill="#f8e27a"/></svg>
<div class="a" style="left:700.5px;top:755.2px;width:4px;height:1.5px;background:#8c9098;border-radius:1px;"></div>
<svg class="a" style="left:722.7px;top:737.5px;" width="15.6" height="15.6" viewBox="0 0 15.6 15.6"><path d="M0.600 3.600V0.600H3.600M12 0.600H15V3.600M15 12V15H12M3.600 15H0.600V12" stroke="#5bab4d" stroke-width="1.100" fill="none"/><path d="M3.600 3.400V9.600Q3.600 11 7 11T10.400 9.600V3.400Z" fill="#f2cf63"/><ellipse cx="7" cy="3.400" rx="3.400" ry="1.400" fill="#fae39a"/><path d="M6.600 13.600 12.400 7.200M7.400 7.600 12.800 13.400" stroke="#e8742a" stroke-width="1.500"/><circle cx="12.600" cy="7" r="1.300" fill="#e8742a"/></svg>
<div class="a" style="left:729px;top:755.2px;width:4px;height:1.5px;background:#8c9098;border-radius:1px;"></div>
<div class="a" style="left:746.7px;top:733.5px;width:24.5px;height:24px;background:#eef2fa;border-radius:3px;border:1px solid #dbe2ec;"></div>
<svg class="a" style="left:751.2px;top:738.2px;" width="15.6" height="15.6" viewBox="0 0 15.6 15.6"><circle cx="7.800" cy="7.800" r="7.400" fill="#db4437"/><path d="M7.800 7.800 1.390 11.500A7.400 7.400 0 0 0 7.800 15.200L11.500 8.800Z" fill="#0f9d58"/><path d="M7.800 7.800 11.500 8.800 7.800 15.200A7.400 7.400 0 0 0 14.210 4.100Z" fill="#ffcd40"/><path d="M7.800 7.800 1.390 11.500A7.400 7.400 0 0 1 1.390 4.100Z" fill="#0f9d58"/><circle cx="7.800" cy="7.800" r="3.500" fill="#fff"/><circle cx="7.800" cy="7.800" r="2.750" fill="#4285f4"/><circle cx="14.200" cy="1.400" r="4.300" fill="#9c27b0"/><circle cx="14.200" cy="1.400" r="3.300" fill="#f3d79c"/><path d="M13 3.800Q12.200 1 14.400 -1.200 16 0.800 15.400 3.600Z" fill="#eaa800"/><circle cx="14.600" cy="1.800" r="0.900" fill="#6b2d0e"/></svg>
<div class="a" style="left:754px;top:756.2px;width:10.4px;height:2px;background:#2f7fd8;border-radius:1px;"></div>
<svg class="a" style="left:779.2px;top:738.3px;" width="15.6" height="14.4" viewBox="0 0 15.6 14.4"><rect x="4.400" y="0.400" width="10.800" height="13.600" rx="1.200" fill="#185c37"/><rect x="9.800" y="0.400" width="5.400" height="4.600" fill="#33c481"/><rect x="9.800" y="5" width="5.400" height="4.400" fill="#21a366"/><rect x="9.800" y="9.400" width="5.400" height="4.600" fill="#107c41"/><rect x="4.400" y="0.400" width="5.400" height="4.600" fill="#21a366"/><rect x="4.400" y="5" width="5.400" height="4.400" fill="#107c41"/><rect x="0.400" y="3.200" width="8" height="8" rx="0.900" fill="#107c41"/><path d="M2.600 5 6.200 9.400M6.200 5 2.600 9.400" stroke="#fff" stroke-width="1.100"/></svg>
<div class="a" style="left:785px;top:755.2px;width:4px;height:1.5px;background:#8c9098;border-radius:1px;"></div>
<svg class="a" style="left:808.5px;top:738px;" width="15" height="15" viewBox="0 0 15 15"><circle cx="7.500" cy="7.500" r="6.900" fill="#fafafa" stroke="#35b3ab" stroke-width="1.300"/><path d="M3.600 6.200Q4.400 4.200 6.600 4.600L7.600 3.800 8.200 5.200Q9.400 5.400 9.800 7L8.400 7.600 9 9.400 6.800 8.600Q4.800 9 3.600 6.200Z" fill="#cfcfcf"/><path d="M7.600 13.400Q7 9.400 9.800 7.200Q12.600 6.200 12.800 9.800Q11.600 13 7.600 13.400Z" fill="#1e1e1e"/><circle cx="6" cy="6.400" r="0.700" fill="#222"/><circle cx="8.400" cy="7.800" r="0.800" fill="#222"/></svg>
<div class="a" style="left:814px;top:755.2px;width:4px;height:1.5px;background:#8c9098;border-radius:1px;"></div>
<svg class="a" style="left:836px;top:737.7px;" width="16" height="16" viewBox="0 0 16 16"><circle cx="8" cy="8" r="7.400" fill="#eceef1" stroke="#a9aeb6" stroke-width="1"/><circle cx="8" cy="8" r="5.800" fill="#fbfbfc"/><path d="M8 8V2.200A5.800 5.800 0 0 1 13.800 8Z" fill="#e9c36a"/><path d="M8 3.400V8H11.600" stroke="#6a6e75" stroke-width="0.900" fill="none"/></svg>
<div class="a" style="left:842px;top:755.2px;width:4px;height:1.5px;background:#8c9098;border-radius:1px;"></div>
<svg class="a" style="left:864.2px;top:737.8px;" width="16" height="15.2" viewBox="0 0 16 15.2"><rect x="0" y="0" width="16" height="15.200" rx="1.600" fill="#ea3f38"/><path d="M6.600 4.600 9.600 7.600 6.600 10.600 3.600 7.600Z" fill="#fff"/><path d="M9.600 4.400 12.800 7.600 9.600 10.800" stroke="#fff" stroke-width="1.300" fill="none"/></svg>
<div class="a" style="left:870.2px;top:755.2px;width:4px;height:1.5px;background:#8c9098;border-radius:1px;"></div>
<svg class="a" style="left:1090px;top:743px;" width="8" height="5" viewBox="0 0 8 5"><path d="M0.800 4.400 4 1 7.200 4.400" stroke="#3a3a3a" stroke-width="1.150" fill="none"/></svg>
<svg class="a" style="left:1108.5px;top:741px;" width="12" height="8" viewBox="0 0 12 8"><path d="M2.800 7.500Q0.400 7.500 0.400 5.500Q0.400 3.800 2.400 3.600Q3 1.600 5.200 1.600Q6.400 1.600 7.200 2.600Q8.400 1.600 9.800 2.600Q10.800 3.400 10.400 4.600Q11.600 5 11.600 6.200Q11.600 7.500 10 7.500Z" fill="#1a7fd8"/></svg>
<svg class="a" style="left:1129.5px;top:740px;" width="11" height="11" viewBox="0 0 11 11"><rect x="0.600" y="1" width="7.800" height="7" rx="0.600" stroke="#333" stroke-width="0.900" fill="none"/><path d="M3 10.400H6.400M4.700 8V10.400" stroke="#333" stroke-width="0.900"/><rect x="8" y="0.400" width="2.400" height="6" rx="0.500" fill="#dfe9f5" stroke="#333" stroke-width="0.800"/><path d="M9.200 6.400V10" stroke="#333" stroke-width="0.800"/></svg>
<svg class="a" style="left:1145px;top:740.5px;" width="11" height="10" viewBox="0 0 11 10"><path d="M0.600 3.500H2.400L4.800 1.200V8.800L2.400 6.500H0.600Z" stroke="#333" stroke-width="0.800" fill="none" stroke-linejoin="round"/><path d="M6.200 3.400Q7.200 5 6.200 6.600M7.600 2.200Q9.400 5 7.600 7.800M9 1.200Q11.400 5 9 8.800" stroke="#333" stroke-width="0.800" fill="none"/></svg>
<span class="t" style="top:735.04px;font-size:8.4px;line-height:10.92px;color:#3a3a3a;right:30.5px;transform:scaleX(0.8791);transform-origin:100% 50%;">3:02 PM</span>
<span class="t" style="top:746.04px;font-size:8.4px;line-height:10.92px;color:#3a3a3a;right:30.5px;transform:scaleX(0.9501);transform-origin:100% 50%;">9/21/2023</span>
<svg class="a" style="left:1208.5px;top:740px;" width="11" height="11" viewBox="0 0 11 11"><circle cx="5.500" cy="5.500" r="5.300" fill="#0a6fd6"/></svg>
<span class="t" style="top:741.65px;font-size:7px;line-height:9.1px;color:#fff;font-weight:bold;left:1212.05px;transform:scaleX(0.9000);transform-origin:50% 50%;">1</span>
</div></body></html>
